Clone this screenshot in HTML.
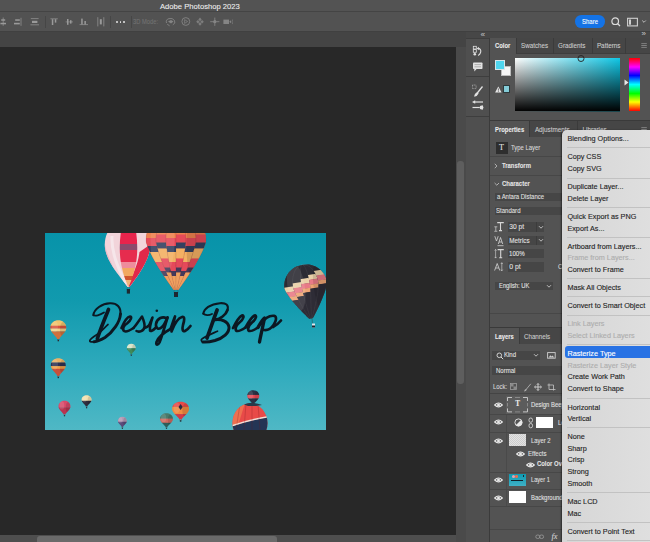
<!DOCTYPE html>
<html><head><meta charset="utf-8"><style>
html,body{margin:0;padding:0;width:650px;height:542px;overflow:hidden;background:#282828;}
body{position:relative;font-family:"Liberation Sans",sans-serif;}
.a{position:absolute;}
.t{position:absolute;white-space:nowrap;-webkit-text-stroke:0.08px currentColor;}
.m{font-size:7.25px;line-height:10px;-webkit-text-stroke:0.12px currentColor;}
svg{position:absolute;overflow:visible;}
</style></head><body>
<div class='a' style='left:0px;top:0px;width:650px;height:11px;background:#535353;'></div>
<div class='a' style='left:0px;top:11px;width:650px;height:1px;background:#444444;'></div>
<div class='a' style='left:0px;top:12px;width:650px;height:19px;background:#525252;'></div>
<div class='a' style='left:0px;top:31px;width:650px;height:1px;background:#404040;'></div>
<div class='a' style='left:0px;top:32px;width:466px;height:15.5px;background:#444444;'></div>
<div class='a' style='left:0px;top:47px;width:456px;height:488px;background:#282828;'></div>
<div class='a' style='left:456px;top:47px;width:10px;height:495px;background:#4a4a4a;'></div>
<div class='a' style='left:457.3px;top:161px;width:6.6px;height:222.5px;background:#5e5e5e;border-radius:3.3px;'></div>
<div class='a' style='left:0px;top:535px;width:456px;height:7px;background:#4e4e4e;'></div>
<div class='a' style='left:37px;top:536px;width:240px;height:6px;background:#6a6a6a;border-radius:3px 3px 0 0;'></div>
<div class='a' style='left:466px;top:32px;width:184px;height:510px;background:#474747;'></div>
<div class='a' style='left:489px;top:38px;width:1px;height:504px;background:#3b3b3b;'></div>
<div class='a' style='left:490px;top:38px;width:160px;height:504px;background:#535353;'></div>
<div class='t' style='left:160.00px;top:2.00px;font-size:7.65px;line-height:10px;color:#eeeeee;font-weight:400;'>Adobe Photoshop 2023</div>
<svg style='left:0px;top:0px;' width='140' height='32' viewBox='0 0 140 32'>
<path d='M3.2 17.5 V25.8' stroke='#9a9a9a' stroke-width='0.7'/>
<rect x='1.2' y='19.3' width='4' height='1.4' fill='#9a9a9a'/><rect x='0.4' y='22.8' width='5.6' height='1.5' fill='#9a9a9a'/>
<path d='M21 17.8 V25.8' stroke='#9a9a9a' stroke-width='0.7'/>
<rect x='15.2' y='19.3' width='4.6' height='1.5' fill='#9a9a9a'/><rect x='14' y='22.8' width='5.8' height='1.6' fill='#9a9a9a'/>
<path d='M30.8 18.6 H38.6 M30.4 24.8 H39' stroke='#9a9a9a' stroke-width='0.7'/>
<rect x='32' y='20.8' width='5.4' height='2.2' fill='#9a9a9a'/>
<path d='M50.4 18.8 H57.8' stroke='#9a9a9a' stroke-width='0.7'/>
<rect x='51.8' y='19.2' width='1.5' height='5.8' fill='#9a9a9a'/><rect x='54.8' y='19.2' width='1.5' height='3.4' fill='#9a9a9a'/>
<path d='M65.6 21.9 H73' stroke='#9a9a9a' stroke-width='0.6'/>
<rect x='67' y='19' width='1.5' height='5.8' fill='#9a9a9a'/><rect x='70' y='20.2' width='1.5' height='3.4' fill='#9a9a9a'/>
<path d='M79.6 24.6 H88' stroke='#9a9a9a' stroke-width='0.7'/>
<rect x='81.2' y='18.6' width='1.5' height='5.8' fill='#9a9a9a'/><rect x='84.4' y='21' width='1.5' height='3.4' fill='#9a9a9a'/>
<path d='M97.8 17.2 V26.4 M103.8 17.2 V26.4' stroke='#9a9a9a' stroke-width='0.7'/>
<rect x='99.8' y='19.2' width='2' height='5.2' fill='#9a9a9a'/>
</svg>
<div class='a' style='left:44.8px;top:15.5px;width:0.8px;height:12.5px;background:#464646;'></div>
<div class='a' style='left:110.3px;top:15.5px;width:0.8px;height:12.5px;background:#464646;'></div>
<div class='a' style='left:131.3px;top:15.5px;width:0.8px;height:12.5px;background:#464646;'></div>
<div class='a' style='left:116.25px;top:20.9px;width:1.9px;height:1.9px;background:#e4e4e4;border-radius:1px;'></div>
<div class='a' style='left:119.55px;top:20.9px;width:1.9px;height:1.9px;background:#e4e4e4;border-radius:1px;'></div>
<div class='a' style='left:122.85px;top:20.9px;width:1.9px;height:1.9px;background:#e4e4e4;border-radius:1px;'></div>
<div class='t' style='left:133.00px;top:16.80px;font-size:6.30px;line-height:10px;color:#727272;font-weight:400;transform:scaleX(0.915);transform-origin:0 50%;'>3D Mode:</div>
<svg style='left:0px;top:0px;' width='240' height='32' viewBox='0 0 240 32'>
<path d='M166.5 23 Q165.5 19.5 169 18.6 Q172.5 17.6 174.5 20.5 Q176 23.5 172.8 24.8' fill='none' stroke='#858585' stroke-width='0.9'/>
<path d='M168 21.5 L171 20 L173.5 21.6 L171 23.4 Z' fill='#858585'/>
<path d='M167.2 24.2 L169.6 25.8' stroke='#858585' stroke-width='0.9'/>
<circle cx='185.8' cy='21.5' r='3.9' fill='none' stroke='#858585' stroke-width='0.9'/>
<path d='M184.6 19.6 L187.6 21.5 L184.6 23.4 Z' fill='none' stroke='#858585' stroke-width='0.7'/>
<path d='M200 17.6 L201.7 19.5 L200 21.3 L198.3 19.5 Z M200 22 L201.7 23.9 L200 25.7 L198.3 23.9 Z M196.2 21.7 L197.9 20 L199.6 21.7 L197.9 23.4 Z M203.8 21.7 L202.1 20 L200.4 21.7 L202.1 23.4 Z' fill='#858585' opacity='0.85'/>
<path d='M214.8 17.6 V25.9 M210.2 21.7 H219.4' stroke='#858585' stroke-width='0.9'/>
<circle cx='214.8' cy='21.7' r='1.6' fill='#858585'/>
<rect x='223.4' y='19.6' width='5.6' height='4.4' fill='#858585'/>
<path d='M229.2 21.8 L231 20.3 V23.3 Z' fill='#858585'/>
<path d='M232.6 19.5 Q231.6 21.8 232.6 24.1' fill='none' stroke='#858585' stroke-width='0.6'/>
</svg>
<div class='a' style='left:575.2px;top:15.2px;width:30px;height:12.6px;background:#1473e6;border-radius:6.3px;'></div>
<div class='t' style='left:581.50px;top:16.50px;font-size:6.30px;line-height:10px;color:#ffffff;font-weight:400;transform:scaleX(0.952);transform-origin:0 50%;'>Share</div>
<svg style='left:609px;top:16px;' width='14' height='12' viewBox='0 0 14 12'><circle cx='6.2' cy='5.2' r='3.3' fill='none' stroke='#dcdcdc' stroke-width='1.2'/><path d='M8.6 7.6 L11 10' stroke='#dcdcdc' stroke-width='1.3'/></svg>
<svg style='left:626px;top:17px;' width='13' height='10' viewBox='0 0 13 10'><rect x='1.6' y='1.3' width='9.8' height='7.6' fill='none' stroke='#d0d0d0' stroke-width='1.1'/><rect x='3' y='2.5' width='2' height='5.2' fill='#d0d0d0'/></svg>
<svg style='left:641px;top:19px;' width='6' height='5' viewBox='0 0 6 5'><path d='M1.2 1.5 L3 3.3 L4.8 1.5' fill='none' stroke='#c8c8c8' stroke-width='0.9'/></svg>
<div class='t' style='left:480.50px;top:29.60px;font-size:8.09px;line-height:10px;color:#bbbbbb;font-weight:400;'>&#171;</div>
<div class='t' style='left:641.50px;top:29.40px;font-size:8.09px;line-height:10px;color:#bbbbbb;font-weight:400;'>&#187;</div>
<div class='a' style='left:466px;top:38px;width:23px;height:504px;background:#4f4f4f;'></div>
<div class='a' style='left:466px;top:75.5px;width:23px;height:1px;background:#3e3e3e;'></div>
<div class='a' style='left:466px;top:115.5px;width:23px;height:1px;background:#3e3e3e;'></div>
<div class='a' style='left:466px;top:37.5px;width:23px;height:0.8px;background:#3e3e3e;'></div>
<svg style='left:466px;top:40px;' width='24' height='75' viewBox='0 0 24 75'>
<rect x='7.3' y='6.3' width='3' height='2.7' fill='none' stroke='#e2e2e2' stroke-width='0.8'/>
<rect x='7.3' y='9.6' width='3' height='2.7' fill='none' stroke='#e2e2e2' stroke-width='0.8'/>
<circle cx='8.8' cy='14.3' r='1.3' fill='#e2e2e2'/>
<path d='M12.2 8.4 Q15.6 9 14.6 12.4 Q14.1 14.4 12.2 15.4' fill='none' stroke='#e2e2e2' stroke-width='1.1'/>
<path d='M10.8 8.5 L12.8 6.8 L12.8 10.2 Z' fill='#e2e2e2'/>
<rect x='7' y='22.5' width='9.5' height='6.5' rx='0.8' fill='#e2e2e2'/>
<path d='M8.3 28.8 L10.8 28.8 L8.3 31.5 Z' fill='#e2e2e2'/>
<path d='M8.5 24.6 H15 M8.5 26.8 H15' stroke='#8a8a8a' stroke-width='0.6'/>
<rect x='6.5' y='45' width='3.6' height='3.6' fill='none' stroke='#c8c8c8' stroke-width='0.6' stroke-dasharray='0.9 0.6'/>
<path d='M16.5 46.5 L11.3 53' stroke='#e2e2e2' stroke-width='1.3'/>
<path d='M11.5 52 Q8.5 53 8.2 56.8 Q11.5 56.3 12.6 53.6 Z' fill='#e2e2e2'/>
<path d='M8 62 H17' stroke='#e2e2e2' stroke-width='1.2'/>
<path d='M6 62 L9.2 60.2 V63.8 Z' fill='#e2e2e2'/>
<path d='M6.5 67.5 H13' stroke='#e2e2e2' stroke-width='1.2'/>
<path d='M12.8 67.5 L17 65.2 V69.8 Z' fill='#e2e2e2'/><circle cx='15.5' cy='67.5' r='1.9' fill='#e2e2e2'/>
</svg>
<div class='a' style='left:490px;top:38px;width:160px;height:15.5px;background:#464646;'></div>
<div class='a' style='left:490px;top:53px;width:160px;height:1px;background:#3e3e3e;'></div>
<div class='a' style='left:490px;top:38px;width:26px;height:16px;background:#535353;'></div>
<div class='a' style='left:516px;top:38px;width:1px;height:15.5px;background:#3b3b3b;'></div>
<div class='a' style='left:553px;top:38px;width:1px;height:15.5px;background:#3b3b3b;'></div>
<div class='a' style='left:591.5px;top:38px;width:1px;height:15.5px;background:#3b3b3b;'></div>
<div class='a' style='left:625.4px;top:38px;width:1px;height:15.5px;background:#3b3b3b;'></div>
<div class='t' style='left:494.60px;top:40.80px;font-size:6.30px;line-height:10px;color:#ececec;font-weight:700;transform:scaleX(0.936);transform-origin:0 50%;'>Color</div>
<div class='t' style='left:520.50px;top:40.60px;font-size:6.30px;line-height:10px;color:#cdcdcd;font-weight:400;transform:scaleX(0.992);transform-origin:0 50%;'>Swatches</div>
<div class='t' style='left:558.00px;top:40.60px;font-size:6.30px;line-height:10px;color:#cdcdcd;font-weight:400;'>Gradients</div>
<div class='t' style='left:596.90px;top:40.60px;font-size:6.35px;line-height:10px;color:#cdcdcd;font-weight:400;'>Patterns</div>
<svg style='left:640.5px;top:43px;' width='7' height='6' viewBox='0 0 7 6'><path d='M0.3 0.6 H5.8 M0.3 2.5 H5.8 M0.3 4.4 H5.8' stroke='#a8a8a8' stroke-width='0.6'/></svg>
<div class='a' style='left:500.7px;top:65.9px;width:10.7px;height:10.2px;background:#f6f6f6;border:0.6px solid #bdbdbd;box-sizing:border-box;'></div>
<div class='a' style='left:494.8px;top:59.5px;width:10.6px;height:10.6px;background:#4fd6ef;border:0.8px solid #d6e6ea;box-sizing:border-box;'></div>
<svg style='left:494.5px;top:85.5px;' width='7' height='7' viewBox='0 0 7 7'><path d='M3.3 0.4 L6.6 6.6 H0.1 Z' fill='#e8e8e8'/><rect x='2.9' y='2.4' width='0.8' height='2.3' fill='#555'/><rect x='2.9' y='5.2' width='0.8' height='0.8' fill='#555'/></svg>
<div class='a' style='left:502.9px;top:85.4px;width:7.6px;height:7.3px;background:#84ccd8;border:0.8px solid #2e3a3c;box-sizing:border-box;'></div>
<svg style='left:515px;top:57.5px;' width='105' height='53.5' viewBox='0 0 105 53.5'><defs><linearGradient id='cf1' x1='0' y1='0' x2='1' y2='0'><stop offset='0' stop-color='#ffffff'/><stop offset='1' stop-color='#0fc7e6'/></linearGradient>
<linearGradient id='cf2' x1='0' y1='0' x2='0' y2='1'><stop offset='0' stop-color='#000' stop-opacity='0'/><stop offset='1' stop-color='#000' stop-opacity='1'/></linearGradient></defs>
<rect width='105' height='53.5' fill='url(#cf1)'/><rect width='105' height='53.5' fill='url(#cf2)'/>
<circle cx='66' cy='0.5' r='3' fill='none' stroke='#222' stroke-width='0.9'/></svg>
<svg style='left:629px;top:57.8px;' width='11' height='53' viewBox='0 0 11 53'><defs><linearGradient id='hue' x1='0' y1='0' x2='0' y2='1'>
<stop offset='0' stop-color='#ff0000'/><stop offset='0.17' stop-color='#ff00ff'/><stop offset='0.33' stop-color='#0000ff'/><stop offset='0.5' stop-color='#00ffff'/><stop offset='0.67' stop-color='#00ff00'/><stop offset='0.83' stop-color='#ffff00'/><stop offset='1' stop-color='#ff0000'/></linearGradient></defs>
<rect width='11' height='53' fill='url(#hue)'/></svg>
<svg style='left:624px;top:79px;' width='5' height='7' viewBox='0 0 5 7'><path d='M0.5 0.5 L4.5 3.5 L0.5 6.5 Z' fill='#e8e8e8'/></svg>
<div class='a' style='left:490px;top:120px;width:160px;height:1px;background:#3a3a3a;'></div>
<div class='a' style='left:490px;top:121px;width:160px;height:16px;background:#464646;'></div>
<div class='a' style='left:490px;top:121px;width:39px;height:16px;background:#535353;'></div>
<div class='a' style='left:529px;top:121px;width:1px;height:16px;background:#3b3b3b;'></div>
<div class='t' style='left:494.70px;top:125.20px;font-size:6.30px;line-height:10px;color:#ececec;font-weight:700;transform:scaleX(0.937);transform-origin:0 50%;'>Properties</div>
<div class='t' style='left:534.90px;top:125.00px;font-size:6.30px;line-height:10px;color:#cdcdcd;font-weight:400;'>Adjustments</div>
<div class='a' style='left:576.5px;top:121px;width:1px;height:16px;background:#3b3b3b;'></div>
<div class='t' style='left:582.50px;top:125.00px;font-size:6.30px;line-height:10px;color:#cdcdcd;font-weight:400;'>Libraries</div>
<svg style='left:640.5px;top:126.5px;' width='7' height='6' viewBox='0 0 7 6'><path d='M0.3 0.6 H5.8 M0.3 2.5 H5.8 M0.3 4.4 H5.8' stroke='#a8a8a8' stroke-width='0.6'/></svg>
<div class='a' style='left:496px;top:142px;width:12px;height:11.5px;background:#2e2e2e;'></div>
<div class='t' style='left:499.00px;top:143.00px;font-size:8.00px;line-height:10px;color:#e6e6e6;font-weight:400;font-family:"Liberation Serif",serif;'>T</div>
<div class='t' style='left:510.90px;top:143.00px;font-size:6.30px;line-height:10px;color:#dadada;font-weight:400;transform:scaleX(0.940);transform-origin:0 50%;'>Type Layer</div>
<div class='a' style='left:490px;top:156px;width:160px;height:1px;background:#474747;'></div>
<svg style='left:493px;top:162px;' width='6' height='8' viewBox='0 0 6 8'><path d='M1.8 1.8 L3.9 4 L1.8 6.2' fill='none' stroke='#c8c8c8' stroke-width='0.8'/></svg>
<div class='t' style='left:501.90px;top:161.00px;font-size:6.30px;line-height:10px;color:#e4e4e4;font-weight:700;transform:scaleX(0.938);transform-origin:0 50%;'>Transform</div>
<div class='a' style='left:490px;top:174.5px;width:160px;height:1px;background:#474747;'></div>
<svg style='left:492.5px;top:180.5px;' width='8' height='6' viewBox='0 0 8 6'><path d='M1.6 2 L3.8 4.2 L6 2' fill='none' stroke='#c8c8c8' stroke-width='0.8'/></svg>
<div class='t' style='left:501.90px;top:178.60px;font-size:6.30px;line-height:10px;color:#e4e4e4;font-weight:700;transform:scaleX(0.945);transform-origin:0 50%;'>Character</div>
<div class='a' style='left:495px;top:192.8px;width:70px;height:8px;background:#464646;'></div>
<div class='t' style='left:496.80px;top:191.80px;font-size:6.30px;line-height:10px;color:#e0e0e0;font-weight:400;transform:scaleX(0.945);transform-origin:0 50%;'>a Antara Distance</div>
<div class='a' style='left:495px;top:207px;width:70px;height:8px;background:#464646;'></div>
<div class='t' style='left:496.30px;top:205.70px;font-size:6.30px;line-height:10px;color:#e0e0e0;font-weight:400;transform:scaleX(0.958);transform-origin:0 50%;'>Standard</div>
<div class='a' style='left:508px;top:222.2px;width:36px;height:9.6px;background:#464646;'></div>
<div class='a' style='left:536px;top:222.2px;width:0.8px;height:9.6px;background:#3c3c3c;'></div>
<svg style='left:537.5px;top:224.5px;' width='6' height='5' viewBox='0 0 6 5'><path d='M1 1.2 L3 3.2 L5 1.2' fill='none' stroke='#dadada' stroke-width='0.8'/></svg>
<div class='t' style='left:509.30px;top:222.00px;font-size:6.70px;line-height:10px;color:#e4e4e4;font-weight:400;'>30 pt</div>
<div class='a' style='left:508px;top:235.89999999999998px;width:36px;height:9.6px;background:#464646;'></div>
<div class='a' style='left:536px;top:235.89999999999998px;width:0.8px;height:9.6px;background:#3c3c3c;'></div>
<svg style='left:537.5px;top:238.2px;' width='6' height='5' viewBox='0 0 6 5'><path d='M1 1.2 L3 3.2 L5 1.2' fill='none' stroke='#dadada' stroke-width='0.8'/></svg>
<div class='t' style='left:509.30px;top:235.70px;font-size:6.33px;line-height:10px;color:#e4e4e4;font-weight:400;'>Metrics</div>
<div class='a' style='left:508px;top:248.7px;width:36px;height:9.6px;background:#464646;'></div>
<div class='t' style='left:509.30px;top:248.50px;font-size:6.30px;line-height:10px;color:#e4e4e4;font-weight:400;transform:scaleX(0.974);transform-origin:0 50%;'>100%</div>
<div class='a' style='left:508px;top:262.0px;width:36px;height:9.6px;background:#464646;'></div>
<div class='t' style='left:509.30px;top:261.80px;font-size:6.89px;line-height:10px;color:#e4e4e4;font-weight:400;'>0 pt</div>
<svg style='left:490px;top:218px;' width='22' height='56' viewBox='0 0 22 56'>
<path d='M497.2 222.6 H503.8 M500.5 222.6 V230.6 M499 230.6 H502' transform='translate(-490 -218)' stroke='#d6d6d6' stroke-width='1.1' fill='none'/>
<path d='M494.3 226.8 H497.3 M495.8 226.8 V231 M494.3 231.3 H497.3' transform='translate(-490 -218)' stroke='#d6d6d6' stroke-width='0.7' fill='none'/>
<path d='M494.8 236.2 L496.5 241 L498.2 236.2' transform='translate(-490 -218)' stroke='#d6d6d6' stroke-width='0.8' fill='none'/>
<path d='M498.3 244 L500.5 237.5 L502.7 244 M499 242 H502' transform='translate(-490 -218)' stroke='#d6d6d6' stroke-width='0.8' fill='none'/>
<path d='M497.5 245.7 H503.5' transform='translate(-490 -218)' stroke='#d6d6d6' stroke-width='0.8'/>
<path d='M497.6 249.6 H503.8 M500.7 249.6 V257.8 M499.2 257.8 H502.2' transform='translate(-490 -218)' stroke='#d6d6d6' stroke-width='1.1' fill='none'/>
<path d='M495.6 249.5 V258 M494.7 250.6 L495.6 249.4 L496.5 250.6 M494.7 256.9 L495.6 258.1 L496.5 256.9' transform='translate(-490 -218)' stroke='#d6d6d6' stroke-width='0.6' fill='none'/>
<path d='M494.6 270.5 L497.2 263.5 L499.8 270.5 M495.6 268 H498.8' transform='translate(-490 -218)' stroke='#d6d6d6' stroke-width='0.8' fill='none'/>
<path d='M501.8 262.8 V270.8 M500.9 264 L501.8 262.7 L502.7 264 M500.9 269.6 L501.8 270.9 L502.7 269.6' transform='translate(-490 -218)' stroke='#d6d6d6' stroke-width='0.6' fill='none'/>
</svg>
<div class='t' style='left:557.50px;top:261.60px;font-size:6.30px;line-height:10px;color:#dadada;font-weight:400;transform:scaleX(0.989);transform-origin:0 50%;'>C</div>
<div class='a' style='left:495px;top:281.7px;width:58px;height:8.6px;background:#464646;'></div>
<div class='t' style='left:498.80px;top:281.20px;font-size:6.30px;line-height:10px;color:#e4e4e4;font-weight:400;transform:scaleX(0.924);transform-origin:0 50%;'>English: UK</div>
<svg style='left:546px;top:284px;' width='6' height='5' viewBox='0 0 6 5'><path d='M1 1.2 L3 3.2 L5 1.2' fill='none' stroke='#dadada' stroke-width='0.8'/></svg>
<div class='a' style='left:490px;top:313px;width:160px;height:1px;background:#474747;'></div>
<div class='a' style='left:490px;top:314px;width:160px;height:14px;background:#535353;'></div>
<div class='a' style='left:490px;top:327px;width:160px;height:1px;background:#3a3a3a;'></div>
<div class='a' style='left:490px;top:328px;width:160px;height:16.3px;background:#464646;'></div>
<div class='a' style='left:490px;top:328px;width:28.7px;height:16.3px;background:#535353;'></div>
<div class='a' style='left:518.7px;top:328px;width:1px;height:16.3px;background:#3b3b3b;'></div>
<div class='t' style='left:494.70px;top:331.60px;font-size:6.30px;line-height:10px;color:#ececec;font-weight:700;transform:scaleX(0.925);transform-origin:0 50%;'>Layers</div>
<div class='t' style='left:523.90px;top:331.60px;font-size:6.30px;line-height:10px;color:#cdcdcd;font-weight:400;transform:scaleX(0.984);transform-origin:0 50%;'>Channels</div>
<div class='a' style='left:492px;top:350.6px;width:48px;height:9.4px;background:#464646;'></div>
<svg style='left:495.5px;top:351.5px;' width='8' height='8' viewBox='0 0 8 8'><circle cx='3.3' cy='3.3' r='2.3' fill='none' stroke='#dedede' stroke-width='0.9'/><path d='M5 5 L7.2 7.2' stroke='#dedede' stroke-width='1'/></svg>
<div class='t' style='left:503.50px;top:350.00px;font-size:6.30px;line-height:10px;color:#e4e4e4;font-weight:400;transform:scaleX(0.960);transform-origin:0 50%;'>Kind</div>
<svg style='left:533px;top:353px;' width='6' height='5' viewBox='0 0 6 5'><path d='M1 1.2 L3 3.2 L5 1.2' fill='none' stroke='#dadada' stroke-width='0.8'/></svg>
<svg style='left:547px;top:352.3px;' width='9' height='7' viewBox='0 0 9 7'><rect x='0.6' y='0.6' width='7.6' height='5.6' fill='none' stroke='#d0d0d0' stroke-width='0.9'/><path d='M1.6 5.4 L3.4 3.2 L4.6 4.4 L5.6 3.6 L7.2 5.4 Z' fill='#d0d0d0'/></svg>
<div class='a' style='left:492px;top:366px;width:75px;height:9px;background:#464646;'></div>
<div class='t' style='left:495.70px;top:365.60px;font-size:6.30px;line-height:10px;color:#e4e4e4;font-weight:400;transform:scaleX(0.956);transform-origin:0 50%;'>Normal</div>
<div class='t' style='left:492.80px;top:381.80px;font-size:6.30px;line-height:10px;color:#dadada;font-weight:400;transform:scaleX(0.943);transform-origin:0 50%;'>Lock:</div>
<svg style='left:510.3px;top:383.4px;' width='7' height='7' viewBox='0 0 7 7'><rect x='0.5' y='0.5' width='6' height='6' fill='none' stroke='#a8a8a8' stroke-width='0.7'/><rect x='0.5' y='0.5' width='3' height='3' fill='#8a8a8a'/><rect x='3.5' y='3.5' width='3' height='3' fill='#8a8a8a'/></svg>
<svg style='left:522.5px;top:382.5px;' width='9' height='9' viewBox='0 0 9 9'><path d='M7.8 0.8 L3.2 6.4' stroke='#b0b0b0' stroke-width='0.9'/><path d='M3.3 5.8 Q1.5 6.6 1 8.5 Q2.9 8.2 3.9 6.8 Z' fill='#b0b0b0'/></svg>
<svg style='left:534.3px;top:383px;' width='8' height='8' viewBox='0 0 8 8'><path d='M4 0.6 V7.4 M0.6 4 H7.4' stroke='#d6d6d6' stroke-width='0.9'/><path d='M2.8 1.8 L4 0.5 L5.2 1.8 M2.8 6.2 L4 7.5 L5.2 6.2 M1.8 2.8 L0.5 4 L1.8 5.2 M6.2 2.8 L7.5 4 L6.2 5.2' fill='none' stroke='#d6d6d6' stroke-width='0.8'/></svg>
<svg style='left:547.2px;top:383px;' width='9' height='8' viewBox='0 0 9 8'><path d='M2 0.5 V6.5 H8.5 M0.5 2 H6.5 V7.5' fill='none' stroke='#c4c4c4' stroke-width='0.8'/></svg>
<div class='a' style='left:490px;top:393px;width:160px;height:1px;background:#444;'></div>
<div class='a' style='left:506px;top:396px;width:60px;height:17.5px;background:#5c5c5c;'></div>
<div class='a' style='left:506px;top:413.5px;width:1px;height:93px;background:#4a4a4a;'></div>
<svg style='left:493.8px;top:401.5px;' width='9' height='6' viewBox='0 0 9 6'><path d='M0.7 3 Q4.5 -0.9 8.3 3 Q4.5 6.9 0.7 3 Z' fill='none' stroke='#e8e8e8' stroke-width='1.1'/><circle cx='4.5' cy='3' r='1.5' fill='#e8e8e8'/></svg>
<svg style='left:507px;top:396.6px;' width='21' height='15.4' viewBox='0 0 21 15.4'><path d='M0.5 4 V0.5 H5 M16 0.5 H20.5 V4 M20.5 11.4 V14.9 H16 M5 14.9 H0.5 V11.4' fill='none' stroke='#d0d0d0' stroke-width='0.9'/><path d='M0.5 6 V9.4 M20.5 6 V9.4 M8 0.5 H13 M8 14.9 H13' fill='none' stroke='#a8a8a8' stroke-width='0.6'/></svg>
<div class='t' style='left:515.30px;top:399.30px;font-size:7.20px;line-height:10px;color:#ececec;font-weight:700;font-family:"Liberation Serif",serif;'>T</div>
<div class='t' style='left:531.30px;top:399.60px;font-size:6.30px;line-height:10px;color:#e4e4e4;font-weight:400;transform:scaleX(0.937);transform-origin:0 50%;'>Design Beep</div>
<div class='a' style='left:490px;top:413.5px;width:160px;height:1px;background:#474747;'></div>
<svg style='left:493.8px;top:419.4px;' width='9' height='6' viewBox='0 0 9 6'><path d='M0.7 3 Q4.5 -0.9 8.3 3 Q4.5 6.9 0.7 3 Z' fill='none' stroke='#e8e8e8' stroke-width='1.1'/><circle cx='4.5' cy='3' r='1.5' fill='#e8e8e8'/></svg>
<svg style='left:513.5px;top:418px;' width='9' height='9' viewBox='0 0 9 9'><circle cx='4.5' cy='4.5' r='3.6' fill='none' stroke='#e8e8e8' stroke-width='0.9'/><path d='M4.5 0.9 A3.6 3.6 0 0 1 4.5 8.1 Z' fill='#e8e8e8' transform='rotate(45 4.5 4.5)'/></svg>
<svg style='left:527.5px;top:416.5px;' width='6' height='12' viewBox='0 0 6 12'><rect x='1' y='1' width='3.5' height='4.3' rx='1.7' fill='none' stroke='#e0e0e0' stroke-width='0.8'/><rect x='1' y='6.5' width='3.5' height='4.3' rx='1.7' fill='none' stroke='#e0e0e0' stroke-width='0.8'/></svg>
<div class='a' style='left:535.5px;top:416.5px;width:17.5px;height:11.8px;background:#ffffff;'></div>
<div class='t' style='left:557.80px;top:417.50px;font-size:6.30px;line-height:10px;color:#e4e4e4;font-weight:400;transform:scaleX(0.937);transform-origin:0 50%;'>Levels 1</div>
<div class='a' style='left:490px;top:431.5px;width:160px;height:1px;background:#474747;'></div>
<svg style='left:493.8px;top:437.5px;' width='9' height='6' viewBox='0 0 9 6'><path d='M0.7 3 Q4.5 -0.9 8.3 3 Q4.5 6.9 0.7 3 Z' fill='none' stroke='#e8e8e8' stroke-width='1.1'/><circle cx='4.5' cy='3' r='1.5' fill='#e8e8e8'/></svg>
<div class='a' style='left:509.2px;top:434px;width:16.6px;height:12px;background:#e2e2e2;background-image:linear-gradient(45deg,#cdcdcd 25%,transparent 25%,transparent 75%,#cdcdcd 75%),linear-gradient(45deg,#cdcdcd 25%,transparent 25%,transparent 75%,#cdcdcd 75%);background-size:2px 2px;background-position:0 0,1px 1px;'></div>
<div class='t' style='left:531.30px;top:435.50px;font-size:6.30px;line-height:10px;color:#e0e0e0;font-weight:400;transform:scaleX(0.933);transform-origin:0 50%;'>Layer 2</div>
<svg style='left:516.3px;top:450.7px;' width='9' height='6' viewBox='0 0 9 6'><path d='M0.7 3 Q4.5 -0.9 8.3 3 Q4.5 6.9 0.7 3 Z' fill='none' stroke='#e8e8e8' stroke-width='1.1'/><circle cx='4.5' cy='3' r='1.5' fill='#e8e8e8'/></svg>
<div class='t' style='left:527.70px;top:448.50px;font-size:6.30px;line-height:10px;color:#e0e0e0;font-weight:400;transform:scaleX(0.966);transform-origin:0 50%;'>Effects</div>
<svg style='left:525.5px;top:461.5px;' width='9' height='6' viewBox='0 0 9 6'><path d='M0.7 3 Q4.5 -0.9 8.3 3 Q4.5 6.9 0.7 3 Z' fill='none' stroke='#e8e8e8' stroke-width='1.1'/><circle cx='4.5' cy='3' r='1.5' fill='#e8e8e8'/></svg>
<div class='t' style='left:536.80px;top:459.30px;font-size:6.30px;line-height:10px;color:#e4e4e4;font-weight:700;transform:scaleX(0.937);transform-origin:0 50%;'>Color Overlay</div>
<div class='a' style='left:490px;top:472px;width:160px;height:1px;background:#474747;'></div>
<svg style='left:493.8px;top:476.8px;' width='9' height='6' viewBox='0 0 9 6'><path d='M0.7 3 Q4.5 -0.9 8.3 3 Q4.5 6.9 0.7 3 Z' fill='none' stroke='#e8e8e8' stroke-width='1.1'/><circle cx='4.5' cy='3' r='1.5' fill='#e8e8e8'/></svg>
<div class='a' style='left:509.2px;top:473.7px;width:16.6px;height:11.9px;background:#1fa3bf;background:linear-gradient(180deg,#0f9bb2,#3fb0c6);'></div>
<div class='a' style='left:512px;top:474.5px;width:3px;height:3px;background:#e8a0b0;border-radius:1.5px;'></div>
<div class='a' style='left:515px;top:475px;width:2.5px;height:2.5px;background:#e87050;border-radius:1.2px;'></div>
<div class='a' style='left:511px;top:480.3px;width:12px;height:1.2px;background:#10202a;'></div>
<div class='a' style='left:523px;top:475px;width:1px;height:1.5px;background:#202830;'></div>
<div class='t' style='left:531.30px;top:474.80px;font-size:6.30px;line-height:10px;color:#e0e0e0;font-weight:400;transform:scaleX(0.895);transform-origin:0 50%;'>Layer 1</div>
<div class='a' style='left:490px;top:488.7px;width:160px;height:1px;background:#474747;'></div>
<svg style='left:493.8px;top:494.5px;' width='9' height='6' viewBox='0 0 9 6'><path d='M0.7 3 Q4.5 -0.9 8.3 3 Q4.5 6.9 0.7 3 Z' fill='none' stroke='#e8e8e8' stroke-width='1.1'/><circle cx='4.5' cy='3' r='1.5' fill='#e8e8e8'/></svg>
<div class='a' style='left:509.2px;top:491.2px;width:16.6px;height:11.8px;background:#ffffff;'></div>
<div class='t' style='left:531.30px;top:492.50px;font-size:6.30px;line-height:10px;color:#e4e4e4;font-weight:400;transform:scaleX(0.937);transform-origin:0 50%;'>Background</div>
<div class='a' style='left:490px;top:505.7px;width:160px;height:1px;background:#474747;'></div>
<div class='a' style='left:490px;top:529px;width:160px;height:1px;background:#474747;'></div>
<svg style='left:535px;top:533.5px;' width='10' height='6' viewBox='0 0 10 6'><rect x='0.8' y='1' width='4' height='3.5' rx='1.7' fill='none' stroke='#9a9a9a' stroke-width='0.8'/><rect x='4.6' y='1' width='4' height='3.5' rx='1.7' fill='none' stroke='#9a9a9a' stroke-width='0.8'/></svg>
<div class='t' style='left:551.50px;top:532.00px;font-size:8.36px;line-height:10px;color:#d8d8d8;font-weight:400;font-family:"Liberation Serif",serif;'><i>fx</i></div>
<div class='a' style='left:45px;top:233px;width:281px;height:197px;overflow:hidden;'><svg width='281' height='197' viewBox='45 233 281 197' style='position:absolute;left:0;top:0;'><defs><linearGradient id='sky' x1='0' y1='0' x2='0' y2='1'>
<stop offset='0' stop-color='#0793a9'/><stop offset='0.35' stop-color='#119aae'/><stop offset='0.7' stop-color='#30abbd'/><stop offset='1' stop-color='#4fb8c5'/></linearGradient></defs><rect x='45' y='233' width='281' height='197' fill='url(#sky)'/><clipPath id='b1c'><path d='M105,248 C103,228 118,220 129,220 C142,220 153,230 150.5,247 C148.5,262 137,277 129.5,287 L127.5,287 C121,277 107,263 105,248 Z'/></clipPath>
<g clip-path='url(#b1c)'>
<rect x='100' y='220' width='55' height='70' fill='#f2d4da'/>
<path d='M104,240 C108,262 118,276 128,287 L120,287 C110,272 103,258 104,240 Z' fill='#eab8c4'/>
<rect x='100' y='265' width='55' height='25' fill='#f2d2d8' opacity='0.6'/>
<path d='M151,244 C149,262 140,277 129.5,288 L128.5,283 C133,275 138,264 139.5,252 Z' fill='#e0284a'/>

<path d='M112,236 C111,252 118,268 126,284' fill='none' stroke='#f6e6ea' stroke-width='3'/>
</g>
<clipPath id='b1g'><path d='M122,226 C119,240 119,256 122,268 C124,277 127,284 128.5,287 C130,284 133,277 135,268 C138,256 138,240 135,226 Z'/></clipPath>
<g clip-path='url(#b1g)'>
<rect x='118' y='222' width='22' height='22' fill='#e8244c'/>
<rect x='118' y='244' width='22' height='6' fill='#8c4a6c'/>
<rect x='118' y='250' width='22' height='12' fill='#e62c4e'/>
<rect x='118' y='262' width='22' height='6' fill='#ee8c9c'/>
<rect x='118' y='268' width='22' height='8' fill='#f2a860'/>
<rect x='118' y='276' width='22' height='4' fill='#d0542e'/>
<rect x='118' y='280' width='22' height='8' fill='#f0b478'/>
</g>
<path d='M127.5,287 L127,289.5 M129.5,287 L130,289.5' stroke='#444' stroke-width='0.3'/>
<rect x='126.8' y='289' width='3.2' height='4.6' fill='#1e2a30'/>
<g transform='rotate(0 176 290)'><polygon points='176.00,208.00 184.54,209.37 187.95,210.73 190.48,212.10 192.54,213.47 194.28,214.83 195.79,216.20 197.12,217.57 198.31,218.93 199.36,220.30 200.31,221.67 201.16,223.03 201.93,224.40 202.61,225.77 203.22,227.13 203.76,228.50 204.24,229.87 204.66,231.23 205.01,232.60 205.31,233.97 205.55,235.33 205.74,236.70 205.88,238.07 205.97,239.43 206.00,240.80 205.78,242.17 205.41,243.53 204.96,244.90 204.47,246.27 203.93,247.63 203.36,249.00 202.77,250.37 202.14,251.73 201.49,253.10 200.81,254.47 200.12,255.83 199.41,257.20 198.67,258.57 197.92,259.93 197.16,261.30 196.38,262.67 195.58,264.03 194.77,265.40 193.95,266.77 193.11,268.13 192.26,269.50 191.39,270.87 190.52,272.23 189.63,273.60 188.74,274.97 187.83,276.33 186.91,277.70 185.98,279.07 185.04,280.43 184.09,281.80 183.13,283.17 182.16,284.53 181.19,285.90 180.20,287.27 179.20,288.63 178.20,290.00 173.80,290.00 172.80,288.63 171.80,287.27 170.81,285.90 169.84,284.53 168.87,283.17 167.91,281.80 166.96,280.43 166.02,279.07 165.09,277.70 164.17,276.33 163.26,274.97 162.37,273.60 161.48,272.23 160.61,270.87 159.74,269.50 158.89,268.13 158.05,266.77 157.23,265.40 156.42,264.03 155.62,262.67 154.84,261.30 154.08,259.93 153.33,258.57 152.59,257.20 151.88,255.83 151.19,254.47 150.51,253.10 149.86,251.73 149.23,250.37 148.64,249.00 148.07,247.63 147.53,246.27 147.04,244.90 146.59,243.53 146.22,242.17 146.00,240.80 146.03,239.43 146.12,238.07 146.26,236.70 146.45,235.33 146.69,233.97 146.99,232.60 147.34,231.23 147.76,229.87 148.24,228.50 148.78,227.13 149.39,225.77 150.07,224.40 150.84,223.03 151.69,221.67 152.64,220.30 153.69,218.93 154.88,217.57 156.21,216.20 157.72,214.83 159.46,213.47 161.52,212.10 164.05,210.73 167.46,209.37 176.00,208.00' fill='#e8704e'/><clipPath id='g1'><polygon points='176.00,208.00 167.46,209.37 164.05,210.73 161.52,212.10 159.46,213.47 157.72,214.83 156.21,216.20 154.88,217.57 153.69,218.93 152.64,220.30 151.69,221.67 150.84,223.03 150.07,224.40 149.39,225.77 148.78,227.13 148.24,228.50 147.76,229.87 147.34,231.23 146.99,232.60 146.69,233.97 146.45,235.33 146.26,236.70 146.12,238.07 146.03,239.43 146.00,240.80 146.22,242.17 146.59,243.53 147.04,244.90 147.53,246.27 148.07,247.63 148.64,249.00 149.23,250.37 149.86,251.73 150.51,253.10 151.19,254.47 151.88,255.83 152.59,257.20 153.33,258.57 154.08,259.93 154.84,261.30 155.62,262.67 156.42,264.03 157.23,265.40 158.05,266.77 158.89,268.13 159.74,269.50 160.61,270.87 161.48,272.23 162.37,273.60 163.26,274.97 164.17,276.33 165.09,277.70 166.02,279.07 166.96,280.43 167.91,281.80 168.87,283.17 169.84,284.53 170.81,285.90 171.80,287.27 172.80,288.63 173.80,290.00 174.53,290.00 173.86,288.63 173.20,287.27 172.54,285.90 171.89,284.53 171.25,283.17 170.61,281.80 169.97,280.43 169.35,279.07 168.73,277.70 168.12,276.33 167.51,274.97 166.91,273.60 166.32,272.23 165.74,270.87 165.16,269.50 164.60,268.13 164.04,266.77 163.49,265.40 162.95,264.03 162.42,262.67 161.89,261.30 161.38,259.93 160.88,258.57 160.40,257.20 159.92,255.83 159.46,254.47 159.01,253.10 158.57,251.73 158.16,250.37 157.76,249.00 157.38,247.63 157.02,246.27 156.69,244.90 156.39,243.53 156.14,242.17 156.00,240.80 156.02,239.43 156.08,238.07 156.17,236.70 156.30,235.33 156.46,233.97 156.66,232.60 156.90,231.23 157.17,229.87 157.49,228.50 157.85,227.13 158.26,225.77 158.71,224.40 159.22,223.03 159.79,221.67 160.42,220.30 161.13,218.93 161.92,217.57 162.81,216.20 163.81,214.83 164.98,213.47 166.34,212.10 168.03,210.73 170.30,209.37 176.00,208.00'/></clipPath><g clip-path='url(#g1)'><rect x='145.00' y='195.00' width='62.00' height='43.30' fill='#ef824e'/><rect x='145.00' y='238.00' width='62.00' height='8.30' fill='#e64a58'/><rect x='145.00' y='246.00' width='62.00' height='6.30' fill='#34405f'/><rect x='145.00' y='252.00' width='62.00' height='10.30' fill='#f3b063'/><rect x='145.00' y='262.00' width='62.00' height='9.30' fill='#e5495a'/><rect x='145.00' y='271.00' width='62.00' height='5.30' fill='#45395a'/><rect x='145.00' y='276.00' width='62.00' height='24.30' fill='#f0a060'/></g><polyline points='176.00,208.00 167.46,209.37 164.05,210.73 161.52,212.10 159.46,213.47 157.72,214.83 156.21,216.20 154.88,217.57 153.69,218.93 152.64,220.30 151.69,221.67 150.84,223.03 150.07,224.40 149.39,225.77 148.78,227.13 148.24,228.50 147.76,229.87 147.34,231.23 146.99,232.60 146.69,233.97 146.45,235.33 146.26,236.70 146.12,238.07 146.03,239.43 146.00,240.80 146.22,242.17 146.59,243.53 147.04,244.90 147.53,246.27 148.07,247.63 148.64,249.00 149.23,250.37 149.86,251.73 150.51,253.10 151.19,254.47 151.88,255.83 152.59,257.20 153.33,258.57 154.08,259.93 154.84,261.30 155.62,262.67 156.42,264.03 157.23,265.40 158.05,266.77 158.89,268.13 159.74,269.50 160.61,270.87 161.48,272.23 162.37,273.60 163.26,274.97 164.17,276.33 165.09,277.70 166.02,279.07 166.96,280.43 167.91,281.80 168.87,283.17 169.84,284.53 170.81,285.90 171.80,287.27 172.80,288.63 173.80,290.00 174.53,290.00 173.86,288.63 173.20,287.27 172.54,285.90 171.89,284.53 171.25,283.17 170.61,281.80 169.97,280.43 169.35,279.07 168.73,277.70 168.12,276.33 167.51,274.97 166.91,273.60 166.32,272.23 165.74,270.87 165.16,269.50 164.60,268.13 164.04,266.77 163.49,265.40 162.95,264.03 162.42,262.67 161.89,261.30 161.38,259.93 160.88,258.57 160.40,257.20 159.92,255.83 159.46,254.47 159.01,253.10 158.57,251.73 158.16,250.37 157.76,249.00 157.38,247.63 157.02,246.27 156.69,244.90 156.39,243.53 156.14,242.17 156.00,240.80 156.02,239.43 156.08,238.07 156.17,236.70 156.30,235.33 156.46,233.97 156.66,232.60 156.90,231.23 157.17,229.87 157.49,228.50 157.85,227.13 158.26,225.77 158.71,224.40 159.22,223.03 159.79,221.67 160.42,220.30 161.13,218.93 161.92,217.57 162.81,216.20 163.81,214.83 164.98,213.47 166.34,212.10 168.03,210.73 170.30,209.37 176.00,208.00' fill='none' stroke='rgba(60,30,50,0.18)' stroke-width='0.5'/><clipPath id='g2'><polygon points='176.00,208.00 170.30,209.37 168.03,210.73 166.34,212.10 164.98,213.47 163.81,214.83 162.81,216.20 161.92,217.57 161.13,218.93 160.42,220.30 159.79,221.67 159.22,223.03 158.71,224.40 158.26,225.77 157.85,227.13 157.49,228.50 157.17,229.87 156.90,231.23 156.66,232.60 156.46,233.97 156.30,235.33 156.17,236.70 156.08,238.07 156.02,239.43 156.00,240.80 156.14,242.17 156.39,243.53 156.69,244.90 157.02,246.27 157.38,247.63 157.76,249.00 158.16,250.37 158.57,251.73 159.01,253.10 159.46,254.47 159.92,255.83 160.40,257.20 160.88,258.57 161.38,259.93 161.89,261.30 162.42,262.67 162.95,264.03 163.49,265.40 164.04,266.77 164.60,268.13 165.16,269.50 165.74,270.87 166.32,272.23 166.91,273.60 167.51,274.97 168.12,276.33 168.73,277.70 169.35,279.07 169.97,280.43 170.61,281.80 171.25,283.17 171.89,284.53 172.54,285.90 173.20,287.27 173.86,288.63 174.53,290.00 175.27,290.00 174.93,288.63 174.60,287.27 174.27,285.90 173.95,284.53 173.62,283.17 173.30,281.80 172.99,280.43 172.67,279.07 172.36,277.70 172.06,276.33 171.75,274.97 171.46,273.60 171.16,272.23 170.87,270.87 170.58,269.50 170.30,268.13 170.02,266.77 169.74,265.40 169.47,264.03 169.21,262.67 168.95,261.30 168.69,259.93 168.44,258.57 168.20,257.20 167.96,255.83 167.73,254.47 167.50,253.10 167.29,251.73 167.08,250.37 166.88,249.00 166.69,247.63 166.51,246.27 166.35,244.90 166.20,243.53 166.07,242.17 166.00,240.80 166.01,239.43 166.04,238.07 166.09,236.70 166.15,235.33 166.23,233.97 166.33,232.60 166.45,231.23 166.59,229.87 166.75,228.50 166.93,227.13 167.13,225.77 167.36,224.40 167.61,223.03 167.90,221.67 168.21,220.30 168.56,218.93 168.96,217.57 169.40,216.20 169.91,214.83 170.49,213.47 171.17,212.10 172.02,210.73 173.15,209.37 176.00,208.00'/></clipPath><g clip-path='url(#g2)'><rect x='145.00' y='191.50' width='62.00' height='43.30' fill='#ef824e'/><rect x='145.00' y='234.50' width='62.00' height='8.30' fill='#e64a58'/><rect x='145.00' y='242.50' width='62.00' height='6.30' fill='#34405f'/><rect x='145.00' y='248.50' width='62.00' height='10.30' fill='#f3b063'/><rect x='145.00' y='258.50' width='62.00' height='9.30' fill='#e5495a'/><rect x='145.00' y='267.50' width='62.00' height='5.30' fill='#45395a'/><rect x='145.00' y='272.50' width='62.00' height='24.30' fill='#f0a060'/></g><polyline points='176.00,208.00 170.30,209.37 168.03,210.73 166.34,212.10 164.98,213.47 163.81,214.83 162.81,216.20 161.92,217.57 161.13,218.93 160.42,220.30 159.79,221.67 159.22,223.03 158.71,224.40 158.26,225.77 157.85,227.13 157.49,228.50 157.17,229.87 156.90,231.23 156.66,232.60 156.46,233.97 156.30,235.33 156.17,236.70 156.08,238.07 156.02,239.43 156.00,240.80 156.14,242.17 156.39,243.53 156.69,244.90 157.02,246.27 157.38,247.63 157.76,249.00 158.16,250.37 158.57,251.73 159.01,253.10 159.46,254.47 159.92,255.83 160.40,257.20 160.88,258.57 161.38,259.93 161.89,261.30 162.42,262.67 162.95,264.03 163.49,265.40 164.04,266.77 164.60,268.13 165.16,269.50 165.74,270.87 166.32,272.23 166.91,273.60 167.51,274.97 168.12,276.33 168.73,277.70 169.35,279.07 169.97,280.43 170.61,281.80 171.25,283.17 171.89,284.53 172.54,285.90 173.20,287.27 173.86,288.63 174.53,290.00 175.27,290.00 174.93,288.63 174.60,287.27 174.27,285.90 173.95,284.53 173.62,283.17 173.30,281.80 172.99,280.43 172.67,279.07 172.36,277.70 172.06,276.33 171.75,274.97 171.46,273.60 171.16,272.23 170.87,270.87 170.58,269.50 170.30,268.13 170.02,266.77 169.74,265.40 169.47,264.03 169.21,262.67 168.95,261.30 168.69,259.93 168.44,258.57 168.20,257.20 167.96,255.83 167.73,254.47 167.50,253.10 167.29,251.73 167.08,250.37 166.88,249.00 166.69,247.63 166.51,246.27 166.35,244.90 166.20,243.53 166.07,242.17 166.00,240.80 166.01,239.43 166.04,238.07 166.09,236.70 166.15,235.33 166.23,233.97 166.33,232.60 166.45,231.23 166.59,229.87 166.75,228.50 166.93,227.13 167.13,225.77 167.36,224.40 167.61,223.03 167.90,221.67 168.21,220.30 168.56,218.93 168.96,217.57 169.40,216.20 169.91,214.83 170.49,213.47 171.17,212.10 172.02,210.73 173.15,209.37 176.00,208.00' fill='none' stroke='rgba(60,30,50,0.18)' stroke-width='0.5'/><clipPath id='g3'><polygon points='176.00,208.00 173.15,209.37 172.02,210.73 171.17,212.10 170.49,213.47 169.91,214.83 169.40,216.20 168.96,217.57 168.56,218.93 168.21,220.30 167.90,221.67 167.61,223.03 167.36,224.40 167.13,225.77 166.93,227.13 166.75,228.50 166.59,229.87 166.45,231.23 166.33,232.60 166.23,233.97 166.15,235.33 166.09,236.70 166.04,238.07 166.01,239.43 166.00,240.80 166.07,242.17 166.20,243.53 166.35,244.90 166.51,246.27 166.69,247.63 166.88,249.00 167.08,250.37 167.29,251.73 167.50,253.10 167.73,254.47 167.96,255.83 168.20,257.20 168.44,258.57 168.69,259.93 168.95,261.30 169.21,262.67 169.47,264.03 169.74,265.40 170.02,266.77 170.30,268.13 170.58,269.50 170.87,270.87 171.16,272.23 171.46,273.60 171.75,274.97 172.06,276.33 172.36,277.70 172.67,279.07 172.99,280.43 173.30,281.80 173.62,283.17 173.95,284.53 174.27,285.90 174.60,287.27 174.93,288.63 175.27,290.00 176.00,290.00 176.00,288.63 176.00,287.27 176.00,285.90 176.00,284.53 176.00,283.17 176.00,281.80 176.00,280.43 176.00,279.07 176.00,277.70 176.00,276.33 176.00,274.97 176.00,273.60 176.00,272.23 176.00,270.87 176.00,269.50 176.00,268.13 176.00,266.77 176.00,265.40 176.00,264.03 176.00,262.67 176.00,261.30 176.00,259.93 176.00,258.57 176.00,257.20 176.00,255.83 176.00,254.47 176.00,253.10 176.00,251.73 176.00,250.37 176.00,249.00 176.00,247.63 176.00,246.27 176.00,244.90 176.00,243.53 176.00,242.17 176.00,240.80 176.00,239.43 176.00,238.07 176.00,236.70 176.00,235.33 176.00,233.97 176.00,232.60 176.00,231.23 176.00,229.87 176.00,228.50 176.00,227.13 176.00,225.77 176.00,224.40 176.00,223.03 176.00,221.67 176.00,220.30 176.00,218.93 176.00,217.57 176.00,216.20 176.00,214.83 176.00,213.47 176.00,212.10 176.00,210.73 176.00,209.37 176.00,208.00'/></clipPath><g clip-path='url(#g3)'><rect x='145.00' y='195.00' width='62.00' height='43.30' fill='#ef824e'/><rect x='145.00' y='238.00' width='62.00' height='8.30' fill='#e64a58'/><rect x='145.00' y='246.00' width='62.00' height='6.30' fill='#34405f'/><rect x='145.00' y='252.00' width='62.00' height='10.30' fill='#f3b063'/><rect x='145.00' y='262.00' width='62.00' height='9.30' fill='#e5495a'/><rect x='145.00' y='271.00' width='62.00' height='5.30' fill='#45395a'/><rect x='145.00' y='276.00' width='62.00' height='24.30' fill='#f0a060'/></g><polyline points='176.00,208.00 173.15,209.37 172.02,210.73 171.17,212.10 170.49,213.47 169.91,214.83 169.40,216.20 168.96,217.57 168.56,218.93 168.21,220.30 167.90,221.67 167.61,223.03 167.36,224.40 167.13,225.77 166.93,227.13 166.75,228.50 166.59,229.87 166.45,231.23 166.33,232.60 166.23,233.97 166.15,235.33 166.09,236.70 166.04,238.07 166.01,239.43 166.00,240.80 166.07,242.17 166.20,243.53 166.35,244.90 166.51,246.27 166.69,247.63 166.88,249.00 167.08,250.37 167.29,251.73 167.50,253.10 167.73,254.47 167.96,255.83 168.20,257.20 168.44,258.57 168.69,259.93 168.95,261.30 169.21,262.67 169.47,264.03 169.74,265.40 170.02,266.77 170.30,268.13 170.58,269.50 170.87,270.87 171.16,272.23 171.46,273.60 171.75,274.97 172.06,276.33 172.36,277.70 172.67,279.07 172.99,280.43 173.30,281.80 173.62,283.17 173.95,284.53 174.27,285.90 174.60,287.27 174.93,288.63 175.27,290.00 176.00,290.00 176.00,288.63 176.00,287.27 176.00,285.90 176.00,284.53 176.00,283.17 176.00,281.80 176.00,280.43 176.00,279.07 176.00,277.70 176.00,276.33 176.00,274.97 176.00,273.60 176.00,272.23 176.00,270.87 176.00,269.50 176.00,268.13 176.00,266.77 176.00,265.40 176.00,264.03 176.00,262.67 176.00,261.30 176.00,259.93 176.00,258.57 176.00,257.20 176.00,255.83 176.00,254.47 176.00,253.10 176.00,251.73 176.00,250.37 176.00,249.00 176.00,247.63 176.00,246.27 176.00,244.90 176.00,243.53 176.00,242.17 176.00,240.80 176.00,239.43 176.00,238.07 176.00,236.70 176.00,235.33 176.00,233.97 176.00,232.60 176.00,231.23 176.00,229.87 176.00,228.50 176.00,227.13 176.00,225.77 176.00,224.40 176.00,223.03 176.00,221.67 176.00,220.30 176.00,218.93 176.00,217.57 176.00,216.20 176.00,214.83 176.00,213.47 176.00,212.10 176.00,210.73 176.00,209.37 176.00,208.00' fill='none' stroke='rgba(60,30,50,0.18)' stroke-width='0.5'/><clipPath id='g4'><polygon points='176.00,208.00 176.00,209.37 176.00,210.73 176.00,212.10 176.00,213.47 176.00,214.83 176.00,216.20 176.00,217.57 176.00,218.93 176.00,220.30 176.00,221.67 176.00,223.03 176.00,224.40 176.00,225.77 176.00,227.13 176.00,228.50 176.00,229.87 176.00,231.23 176.00,232.60 176.00,233.97 176.00,235.33 176.00,236.70 176.00,238.07 176.00,239.43 176.00,240.80 176.00,242.17 176.00,243.53 176.00,244.90 176.00,246.27 176.00,247.63 176.00,249.00 176.00,250.37 176.00,251.73 176.00,253.10 176.00,254.47 176.00,255.83 176.00,257.20 176.00,258.57 176.00,259.93 176.00,261.30 176.00,262.67 176.00,264.03 176.00,265.40 176.00,266.77 176.00,268.13 176.00,269.50 176.00,270.87 176.00,272.23 176.00,273.60 176.00,274.97 176.00,276.33 176.00,277.70 176.00,279.07 176.00,280.43 176.00,281.80 176.00,283.17 176.00,284.53 176.00,285.90 176.00,287.27 176.00,288.63 176.00,290.00 176.73,290.00 177.07,288.63 177.40,287.27 177.73,285.90 178.05,284.53 178.38,283.17 178.70,281.80 179.01,280.43 179.33,279.07 179.64,277.70 179.94,276.33 180.25,274.97 180.54,273.60 180.84,272.23 181.13,270.87 181.42,269.50 181.70,268.13 181.98,266.77 182.26,265.40 182.53,264.03 182.79,262.67 183.05,261.30 183.31,259.93 183.56,258.57 183.80,257.20 184.04,255.83 184.27,254.47 184.50,253.10 184.71,251.73 184.92,250.37 185.12,249.00 185.31,247.63 185.49,246.27 185.65,244.90 185.80,243.53 185.93,242.17 186.00,240.80 185.99,239.43 185.96,238.07 185.91,236.70 185.85,235.33 185.77,233.97 185.67,232.60 185.55,231.23 185.41,229.87 185.25,228.50 185.07,227.13 184.87,225.77 184.64,224.40 184.39,223.03 184.10,221.67 183.79,220.30 183.44,218.93 183.04,217.57 182.60,216.20 182.09,214.83 181.51,213.47 180.83,212.10 179.98,210.73 178.85,209.37 176.00,208.00'/></clipPath><g clip-path='url(#g4)'><rect x='145.00' y='191.50' width='62.00' height='43.30' fill='#ef824e'/><rect x='145.00' y='234.50' width='62.00' height='8.30' fill='#e64a58'/><rect x='145.00' y='242.50' width='62.00' height='6.30' fill='#34405f'/><rect x='145.00' y='248.50' width='62.00' height='10.30' fill='#f3b063'/><rect x='145.00' y='258.50' width='62.00' height='9.30' fill='#e5495a'/><rect x='145.00' y='267.50' width='62.00' height='5.30' fill='#45395a'/><rect x='145.00' y='272.50' width='62.00' height='24.30' fill='#f0a060'/></g><polyline points='176.00,208.00 176.00,209.37 176.00,210.73 176.00,212.10 176.00,213.47 176.00,214.83 176.00,216.20 176.00,217.57 176.00,218.93 176.00,220.30 176.00,221.67 176.00,223.03 176.00,224.40 176.00,225.77 176.00,227.13 176.00,228.50 176.00,229.87 176.00,231.23 176.00,232.60 176.00,233.97 176.00,235.33 176.00,236.70 176.00,238.07 176.00,239.43 176.00,240.80 176.00,242.17 176.00,243.53 176.00,244.90 176.00,246.27 176.00,247.63 176.00,249.00 176.00,250.37 176.00,251.73 176.00,253.10 176.00,254.47 176.00,255.83 176.00,257.20 176.00,258.57 176.00,259.93 176.00,261.30 176.00,262.67 176.00,264.03 176.00,265.40 176.00,266.77 176.00,268.13 176.00,269.50 176.00,270.87 176.00,272.23 176.00,273.60 176.00,274.97 176.00,276.33 176.00,277.70 176.00,279.07 176.00,280.43 176.00,281.80 176.00,283.17 176.00,284.53 176.00,285.90 176.00,287.27 176.00,288.63 176.00,290.00 176.73,290.00 177.07,288.63 177.40,287.27 177.73,285.90 178.05,284.53 178.38,283.17 178.70,281.80 179.01,280.43 179.33,279.07 179.64,277.70 179.94,276.33 180.25,274.97 180.54,273.60 180.84,272.23 181.13,270.87 181.42,269.50 181.70,268.13 181.98,266.77 182.26,265.40 182.53,264.03 182.79,262.67 183.05,261.30 183.31,259.93 183.56,258.57 183.80,257.20 184.04,255.83 184.27,254.47 184.50,253.10 184.71,251.73 184.92,250.37 185.12,249.00 185.31,247.63 185.49,246.27 185.65,244.90 185.80,243.53 185.93,242.17 186.00,240.80 185.99,239.43 185.96,238.07 185.91,236.70 185.85,235.33 185.77,233.97 185.67,232.60 185.55,231.23 185.41,229.87 185.25,228.50 185.07,227.13 184.87,225.77 184.64,224.40 184.39,223.03 184.10,221.67 183.79,220.30 183.44,218.93 183.04,217.57 182.60,216.20 182.09,214.83 181.51,213.47 180.83,212.10 179.98,210.73 178.85,209.37 176.00,208.00' fill='none' stroke='rgba(60,30,50,0.18)' stroke-width='0.5'/><clipPath id='g5'><polygon points='176.00,208.00 178.85,209.37 179.98,210.73 180.83,212.10 181.51,213.47 182.09,214.83 182.60,216.20 183.04,217.57 183.44,218.93 183.79,220.30 184.10,221.67 184.39,223.03 184.64,224.40 184.87,225.77 185.07,227.13 185.25,228.50 185.41,229.87 185.55,231.23 185.67,232.60 185.77,233.97 185.85,235.33 185.91,236.70 185.96,238.07 185.99,239.43 186.00,240.80 185.93,242.17 185.80,243.53 185.65,244.90 185.49,246.27 185.31,247.63 185.12,249.00 184.92,250.37 184.71,251.73 184.50,253.10 184.27,254.47 184.04,255.83 183.80,257.20 183.56,258.57 183.31,259.93 183.05,261.30 182.79,262.67 182.53,264.03 182.26,265.40 181.98,266.77 181.70,268.13 181.42,269.50 181.13,270.87 180.84,272.23 180.54,273.60 180.25,274.97 179.94,276.33 179.64,277.70 179.33,279.07 179.01,280.43 178.70,281.80 178.38,283.17 178.05,284.53 177.73,285.90 177.40,287.27 177.07,288.63 176.73,290.00 177.47,290.00 178.14,288.63 178.80,287.27 179.46,285.90 180.11,284.53 180.75,283.17 181.39,281.80 182.03,280.43 182.65,279.07 183.27,277.70 183.88,276.33 184.49,274.97 185.09,273.60 185.68,272.23 186.26,270.87 186.84,269.50 187.40,268.13 187.96,266.77 188.51,265.40 189.05,264.03 189.58,262.67 190.11,261.30 190.62,259.93 191.12,258.57 191.60,257.20 192.08,255.83 192.54,254.47 192.99,253.10 193.43,251.73 193.84,250.37 194.24,249.00 194.62,247.63 194.98,246.27 195.31,244.90 195.61,243.53 195.86,242.17 196.00,240.80 195.98,239.43 195.92,238.07 195.83,236.70 195.70,235.33 195.54,233.97 195.34,232.60 195.10,231.23 194.83,229.87 194.51,228.50 194.15,227.13 193.74,225.77 193.29,224.40 192.78,223.03 192.21,221.67 191.58,220.30 190.87,218.93 190.08,217.57 189.19,216.20 188.19,214.83 187.02,213.47 185.66,212.10 183.97,210.73 181.70,209.37 176.00,208.00'/></clipPath><g clip-path='url(#g5)'><rect x='145.00' y='195.00' width='62.00' height='43.30' fill='#ef824e'/><rect x='145.00' y='238.00' width='62.00' height='8.30' fill='#e64a58'/><rect x='145.00' y='246.00' width='62.00' height='6.30' fill='#34405f'/><rect x='145.00' y='252.00' width='62.00' height='10.30' fill='#f3b063'/><rect x='145.00' y='262.00' width='62.00' height='9.30' fill='#e5495a'/><rect x='145.00' y='271.00' width='62.00' height='5.30' fill='#45395a'/><rect x='145.00' y='276.00' width='62.00' height='24.30' fill='#f0a060'/></g><polyline points='176.00,208.00 178.85,209.37 179.98,210.73 180.83,212.10 181.51,213.47 182.09,214.83 182.60,216.20 183.04,217.57 183.44,218.93 183.79,220.30 184.10,221.67 184.39,223.03 184.64,224.40 184.87,225.77 185.07,227.13 185.25,228.50 185.41,229.87 185.55,231.23 185.67,232.60 185.77,233.97 185.85,235.33 185.91,236.70 185.96,238.07 185.99,239.43 186.00,240.80 185.93,242.17 185.80,243.53 185.65,244.90 185.49,246.27 185.31,247.63 185.12,249.00 184.92,250.37 184.71,251.73 184.50,253.10 184.27,254.47 184.04,255.83 183.80,257.20 183.56,258.57 183.31,259.93 183.05,261.30 182.79,262.67 182.53,264.03 182.26,265.40 181.98,266.77 181.70,268.13 181.42,269.50 181.13,270.87 180.84,272.23 180.54,273.60 180.25,274.97 179.94,276.33 179.64,277.70 179.33,279.07 179.01,280.43 178.70,281.80 178.38,283.17 178.05,284.53 177.73,285.90 177.40,287.27 177.07,288.63 176.73,290.00 177.47,290.00 178.14,288.63 178.80,287.27 179.46,285.90 180.11,284.53 180.75,283.17 181.39,281.80 182.03,280.43 182.65,279.07 183.27,277.70 183.88,276.33 184.49,274.97 185.09,273.60 185.68,272.23 186.26,270.87 186.84,269.50 187.40,268.13 187.96,266.77 188.51,265.40 189.05,264.03 189.58,262.67 190.11,261.30 190.62,259.93 191.12,258.57 191.60,257.20 192.08,255.83 192.54,254.47 192.99,253.10 193.43,251.73 193.84,250.37 194.24,249.00 194.62,247.63 194.98,246.27 195.31,244.90 195.61,243.53 195.86,242.17 196.00,240.80 195.98,239.43 195.92,238.07 195.83,236.70 195.70,235.33 195.54,233.97 195.34,232.60 195.10,231.23 194.83,229.87 194.51,228.50 194.15,227.13 193.74,225.77 193.29,224.40 192.78,223.03 192.21,221.67 191.58,220.30 190.87,218.93 190.08,217.57 189.19,216.20 188.19,214.83 187.02,213.47 185.66,212.10 183.97,210.73 181.70,209.37 176.00,208.00' fill='none' stroke='rgba(60,30,50,0.18)' stroke-width='0.5'/><clipPath id='g6'><polygon points='176.00,208.00 181.70,209.37 183.97,210.73 185.66,212.10 187.02,213.47 188.19,214.83 189.19,216.20 190.08,217.57 190.87,218.93 191.58,220.30 192.21,221.67 192.78,223.03 193.29,224.40 193.74,225.77 194.15,227.13 194.51,228.50 194.83,229.87 195.10,231.23 195.34,232.60 195.54,233.97 195.70,235.33 195.83,236.70 195.92,238.07 195.98,239.43 196.00,240.80 195.86,242.17 195.61,243.53 195.31,244.90 194.98,246.27 194.62,247.63 194.24,249.00 193.84,250.37 193.43,251.73 192.99,253.10 192.54,254.47 192.08,255.83 191.60,257.20 191.12,258.57 190.62,259.93 190.11,261.30 189.58,262.67 189.05,264.03 188.51,265.40 187.96,266.77 187.40,268.13 186.84,269.50 186.26,270.87 185.68,272.23 185.09,273.60 184.49,274.97 183.88,276.33 183.27,277.70 182.65,279.07 182.03,280.43 181.39,281.80 180.75,283.17 180.11,284.53 179.46,285.90 178.80,287.27 178.14,288.63 177.47,290.00 178.20,290.00 179.20,288.63 180.20,287.27 181.19,285.90 182.16,284.53 183.13,283.17 184.09,281.80 185.04,280.43 185.98,279.07 186.91,277.70 187.83,276.33 188.74,274.97 189.63,273.60 190.52,272.23 191.39,270.87 192.26,269.50 193.11,268.13 193.95,266.77 194.77,265.40 195.58,264.03 196.38,262.67 197.16,261.30 197.92,259.93 198.67,258.57 199.41,257.20 200.12,255.83 200.81,254.47 201.49,253.10 202.14,251.73 202.77,250.37 203.36,249.00 203.93,247.63 204.47,246.27 204.96,244.90 205.41,243.53 205.78,242.17 206.00,240.80 205.97,239.43 205.88,238.07 205.74,236.70 205.55,235.33 205.31,233.97 205.01,232.60 204.66,231.23 204.24,229.87 203.76,228.50 203.22,227.13 202.61,225.77 201.93,224.40 201.16,223.03 200.31,221.67 199.36,220.30 198.31,218.93 197.12,217.57 195.79,216.20 194.28,214.83 192.54,213.47 190.48,212.10 187.95,210.73 184.54,209.37 176.00,208.00'/></clipPath><g clip-path='url(#g6)'><rect x='145.00' y='191.50' width='62.00' height='43.30' fill='#ef824e'/><rect x='145.00' y='234.50' width='62.00' height='8.30' fill='#e64a58'/><rect x='145.00' y='242.50' width='62.00' height='6.30' fill='#34405f'/><rect x='145.00' y='248.50' width='62.00' height='10.30' fill='#f3b063'/><rect x='145.00' y='258.50' width='62.00' height='9.30' fill='#e5495a'/><rect x='145.00' y='267.50' width='62.00' height='5.30' fill='#45395a'/><rect x='145.00' y='272.50' width='62.00' height='24.30' fill='#f0a060'/></g><polyline points='176.00,208.00 181.70,209.37 183.97,210.73 185.66,212.10 187.02,213.47 188.19,214.83 189.19,216.20 190.08,217.57 190.87,218.93 191.58,220.30 192.21,221.67 192.78,223.03 193.29,224.40 193.74,225.77 194.15,227.13 194.51,228.50 194.83,229.87 195.10,231.23 195.34,232.60 195.54,233.97 195.70,235.33 195.83,236.70 195.92,238.07 195.98,239.43 196.00,240.80 195.86,242.17 195.61,243.53 195.31,244.90 194.98,246.27 194.62,247.63 194.24,249.00 193.84,250.37 193.43,251.73 192.99,253.10 192.54,254.47 192.08,255.83 191.60,257.20 191.12,258.57 190.62,259.93 190.11,261.30 189.58,262.67 189.05,264.03 188.51,265.40 187.96,266.77 187.40,268.13 186.84,269.50 186.26,270.87 185.68,272.23 185.09,273.60 184.49,274.97 183.88,276.33 183.27,277.70 182.65,279.07 182.03,280.43 181.39,281.80 180.75,283.17 180.11,284.53 179.46,285.90 178.80,287.27 178.14,288.63 177.47,290.00 178.20,290.00 179.20,288.63 180.20,287.27 181.19,285.90 182.16,284.53 183.13,283.17 184.09,281.80 185.04,280.43 185.98,279.07 186.91,277.70 187.83,276.33 188.74,274.97 189.63,273.60 190.52,272.23 191.39,270.87 192.26,269.50 193.11,268.13 193.95,266.77 194.77,265.40 195.58,264.03 196.38,262.67 197.16,261.30 197.92,259.93 198.67,258.57 199.41,257.20 200.12,255.83 200.81,254.47 201.49,253.10 202.14,251.73 202.77,250.37 203.36,249.00 203.93,247.63 204.47,246.27 204.96,244.90 205.41,243.53 205.78,242.17 206.00,240.80 205.97,239.43 205.88,238.07 205.74,236.70 205.55,235.33 205.31,233.97 205.01,232.60 204.66,231.23 204.24,229.87 203.76,228.50 203.22,227.13 202.61,225.77 201.93,224.40 201.16,223.03 200.31,221.67 199.36,220.30 198.31,218.93 197.12,217.57 195.79,216.20 194.28,214.83 192.54,213.47 190.48,212.10 187.95,210.73 184.54,209.37 176.00,208.00' fill='none' stroke='rgba(60,30,50,0.18)' stroke-width='0.5'/><clipPath id='e7'><polygon points='176.00,208.00 184.54,209.37 187.95,210.73 190.48,212.10 192.54,213.47 194.28,214.83 195.79,216.20 197.12,217.57 198.31,218.93 199.36,220.30 200.31,221.67 201.16,223.03 201.93,224.40 202.61,225.77 203.22,227.13 203.76,228.50 204.24,229.87 204.66,231.23 205.01,232.60 205.31,233.97 205.55,235.33 205.74,236.70 205.88,238.07 205.97,239.43 206.00,240.80 205.78,242.17 205.41,243.53 204.96,244.90 204.47,246.27 203.93,247.63 203.36,249.00 202.77,250.37 202.14,251.73 201.49,253.10 200.81,254.47 200.12,255.83 199.41,257.20 198.67,258.57 197.92,259.93 197.16,261.30 196.38,262.67 195.58,264.03 194.77,265.40 193.95,266.77 193.11,268.13 192.26,269.50 191.39,270.87 190.52,272.23 189.63,273.60 188.74,274.97 187.83,276.33 186.91,277.70 185.98,279.07 185.04,280.43 184.09,281.80 183.13,283.17 182.16,284.53 181.19,285.90 180.20,287.27 179.20,288.63 178.20,290.00 173.80,290.00 172.80,288.63 171.80,287.27 170.81,285.90 169.84,284.53 168.87,283.17 167.91,281.80 166.96,280.43 166.02,279.07 165.09,277.70 164.17,276.33 163.26,274.97 162.37,273.60 161.48,272.23 160.61,270.87 159.74,269.50 158.89,268.13 158.05,266.77 157.23,265.40 156.42,264.03 155.62,262.67 154.84,261.30 154.08,259.93 153.33,258.57 152.59,257.20 151.88,255.83 151.19,254.47 150.51,253.10 149.86,251.73 149.23,250.37 148.64,249.00 148.07,247.63 147.53,246.27 147.04,244.90 146.59,243.53 146.22,242.17 146.00,240.80 146.03,239.43 146.12,238.07 146.26,236.70 146.45,235.33 146.69,233.97 146.99,232.60 147.34,231.23 147.76,229.87 148.24,228.50 148.78,227.13 149.39,225.77 150.07,224.40 150.84,223.03 151.69,221.67 152.64,220.30 153.69,218.93 154.88,217.57 156.21,216.20 157.72,214.83 159.46,213.47 161.52,212.10 164.05,210.73 167.46,209.37 176.00,208.00'/></clipPath><g clip-path='url(#e7)'><ellipse cx='162.50' cy='241.00' rx='12.00' ry='36.90' fill='rgba(255,255,255,0.10)'/><ellipse cx='197.00' cy='246.00' rx='10.50' ry='41.00' fill='rgba(0,0,0,0.12)'/></g></g><path d='M174.3,290 L173.8,292.5 M177.7,290 L178.2,292.5' stroke='#444' stroke-width='0.3'/><rect x='174' y='292' width='4' height='5' fill='#1e2630'/><g transform='rotate(-9 311 318.5)'><polygon points='311.00,264.00 317.25,264.91 319.75,265.82 321.59,266.73 323.09,267.63 324.35,268.54 325.45,269.45 326.41,270.36 327.27,271.27 328.02,272.18 328.70,273.08 329.31,273.99 329.85,274.90 330.33,275.81 330.76,276.72 331.13,277.62 331.46,278.53 331.73,279.44 331.97,280.35 332.16,281.26 332.30,282.17 332.41,283.07 332.47,283.98 332.50,284.89 332.35,285.80 332.09,286.71 331.78,287.62 331.45,288.52 331.08,289.43 330.69,290.34 330.28,291.25 329.85,292.16 329.41,293.07 328.94,293.98 328.47,294.88 327.98,295.79 327.48,296.70 326.97,297.61 326.45,298.52 325.91,299.43 325.37,300.33 324.81,301.24 324.25,302.15 323.68,303.06 323.10,303.97 322.51,304.88 321.91,305.78 321.30,306.69 320.69,307.60 320.07,308.51 319.44,309.42 318.81,310.32 318.16,311.23 317.52,312.14 316.86,313.05 316.20,313.96 315.53,314.87 314.86,315.77 314.18,316.68 313.49,317.59 312.80,318.50 309.20,318.50 308.51,317.59 307.82,316.68 307.14,315.77 306.47,314.87 305.80,313.96 305.14,313.05 304.48,312.14 303.84,311.23 303.19,310.32 302.56,309.42 301.93,308.51 301.31,307.60 300.70,306.69 300.09,305.78 299.49,304.88 298.90,303.97 298.32,303.06 297.75,302.15 297.19,301.24 296.63,300.33 296.09,299.43 295.55,298.52 295.03,297.61 294.52,296.70 294.02,295.79 293.53,294.88 293.06,293.98 292.59,293.07 292.15,292.16 291.72,291.25 291.31,290.34 290.92,289.43 290.55,288.52 290.22,287.62 289.91,286.71 289.65,285.80 289.50,284.89 289.53,283.98 289.59,283.07 289.70,282.17 289.84,281.26 290.03,280.35 290.27,279.44 290.54,278.53 290.87,277.62 291.24,276.72 291.67,275.81 292.15,274.90 292.69,273.99 293.30,273.08 293.98,272.18 294.73,271.27 295.59,270.36 296.55,269.45 297.65,268.54 298.91,267.63 300.41,266.73 302.25,265.82 304.75,264.91 311.00,264.00' fill='#2c2b33'/><clipPath id='g8'><polygon points='311.00,264.00 304.75,264.91 302.25,265.82 300.41,266.73 298.91,267.63 297.65,268.54 296.55,269.45 295.59,270.36 294.73,271.27 293.98,272.18 293.30,273.08 292.69,273.99 292.15,274.90 291.67,275.81 291.24,276.72 290.87,277.62 290.54,278.53 290.27,279.44 290.03,280.35 289.84,281.26 289.70,282.17 289.59,283.07 289.53,283.98 289.50,284.89 289.65,285.80 289.91,286.71 290.22,287.62 290.55,288.52 290.92,289.43 291.31,290.34 291.72,291.25 292.15,292.16 292.59,293.07 293.06,293.98 293.53,294.88 294.02,295.79 294.52,296.70 295.03,297.61 295.55,298.52 296.09,299.43 296.63,300.33 297.19,301.24 297.75,302.15 298.32,303.06 298.90,303.97 299.49,304.88 300.09,305.78 300.70,306.69 301.31,307.60 301.93,308.51 302.56,309.42 303.19,310.32 303.84,311.23 304.48,312.14 305.14,313.05 305.80,313.96 306.47,314.87 307.14,315.77 307.82,316.68 308.51,317.59 309.20,318.50 309.92,318.50 309.51,317.59 309.09,316.68 308.69,315.77 308.28,314.87 307.88,313.96 307.48,313.05 307.09,312.14 306.70,311.23 306.32,310.32 305.94,309.42 305.56,308.51 305.19,307.60 304.82,306.69 304.45,305.78 304.10,304.88 303.74,303.97 303.39,303.06 303.05,302.15 302.71,301.24 302.38,300.33 302.05,299.43 301.73,298.52 301.42,297.61 301.11,296.70 300.81,295.79 300.52,294.88 300.23,293.98 299.96,293.07 299.69,292.16 299.43,291.25 299.19,290.34 298.95,289.43 298.73,288.52 298.53,287.62 298.35,286.71 298.19,285.80 298.10,284.89 298.12,283.98 298.15,283.07 298.22,282.17 298.31,281.26 298.42,280.35 298.56,279.44 298.73,278.53 298.92,277.62 299.15,276.72 299.40,275.81 299.69,274.90 300.01,273.99 300.38,273.08 300.79,272.18 301.24,271.27 301.75,270.36 302.33,269.45 302.99,268.54 303.75,267.63 304.65,266.73 305.75,265.82 307.25,264.91 311.00,264.00'/></clipPath><g clip-path='url(#g8)'><rect x='288.50' y='250.00' width='45.00' height='34.30' fill='#2c2b33'/><rect x='288.50' y='284.00' width='45.00' height='5.30' fill='#ead0a8'/><rect x='288.50' y='289.00' width='45.00' height='5.30' fill='#e87a86'/><rect x='288.50' y='294.00' width='45.00' height='4.30' fill='#eea474'/><rect x='288.50' y='298.00' width='45.00' height='32.30' fill='#2e2c36'/></g><polyline points='311.00,264.00 304.75,264.91 302.25,265.82 300.41,266.73 298.91,267.63 297.65,268.54 296.55,269.45 295.59,270.36 294.73,271.27 293.98,272.18 293.30,273.08 292.69,273.99 292.15,274.90 291.67,275.81 291.24,276.72 290.87,277.62 290.54,278.53 290.27,279.44 290.03,280.35 289.84,281.26 289.70,282.17 289.59,283.07 289.53,283.98 289.50,284.89 289.65,285.80 289.91,286.71 290.22,287.62 290.55,288.52 290.92,289.43 291.31,290.34 291.72,291.25 292.15,292.16 292.59,293.07 293.06,293.98 293.53,294.88 294.02,295.79 294.52,296.70 295.03,297.61 295.55,298.52 296.09,299.43 296.63,300.33 297.19,301.24 297.75,302.15 298.32,303.06 298.90,303.97 299.49,304.88 300.09,305.78 300.70,306.69 301.31,307.60 301.93,308.51 302.56,309.42 303.19,310.32 303.84,311.23 304.48,312.14 305.14,313.05 305.80,313.96 306.47,314.87 307.14,315.77 307.82,316.68 308.51,317.59 309.20,318.50 309.92,318.50 309.51,317.59 309.09,316.68 308.69,315.77 308.28,314.87 307.88,313.96 307.48,313.05 307.09,312.14 306.70,311.23 306.32,310.32 305.94,309.42 305.56,308.51 305.19,307.60 304.82,306.69 304.45,305.78 304.10,304.88 303.74,303.97 303.39,303.06 303.05,302.15 302.71,301.24 302.38,300.33 302.05,299.43 301.73,298.52 301.42,297.61 301.11,296.70 300.81,295.79 300.52,294.88 300.23,293.98 299.96,293.07 299.69,292.16 299.43,291.25 299.19,290.34 298.95,289.43 298.73,288.52 298.53,287.62 298.35,286.71 298.19,285.80 298.10,284.89 298.12,283.98 298.15,283.07 298.22,282.17 298.31,281.26 298.42,280.35 298.56,279.44 298.73,278.53 298.92,277.62 299.15,276.72 299.40,275.81 299.69,274.90 300.01,273.99 300.38,273.08 300.79,272.18 301.24,271.27 301.75,270.36 302.33,269.45 302.99,268.54 303.75,267.63 304.65,266.73 305.75,265.82 307.25,264.91 311.00,264.00' fill='none' stroke='rgba(255,255,255,0.08)' stroke-width='0.5'/><clipPath id='g9'><polygon points='311.00,264.00 307.25,264.91 305.75,265.82 304.65,266.73 303.75,267.63 302.99,268.54 302.33,269.45 301.75,270.36 301.24,271.27 300.79,272.18 300.38,273.08 300.01,273.99 299.69,274.90 299.40,275.81 299.15,276.72 298.92,277.62 298.73,278.53 298.56,279.44 298.42,280.35 298.31,281.26 298.22,282.17 298.15,283.07 298.12,283.98 298.10,284.89 298.19,285.80 298.35,286.71 298.53,287.62 298.73,288.52 298.95,289.43 299.19,290.34 299.43,291.25 299.69,292.16 299.96,293.07 300.23,293.98 300.52,294.88 300.81,295.79 301.11,296.70 301.42,297.61 301.73,298.52 302.05,299.43 302.38,300.33 302.71,301.24 303.05,302.15 303.39,303.06 303.74,303.97 304.10,304.88 304.45,305.78 304.82,306.69 305.19,307.60 305.56,308.51 305.94,309.42 306.32,310.32 306.70,311.23 307.09,312.14 307.48,313.05 307.88,313.96 308.28,314.87 308.69,315.77 309.09,316.68 309.51,317.59 309.92,318.50 310.64,318.50 310.50,317.59 310.36,316.68 310.23,315.77 310.09,314.87 309.96,313.96 309.83,313.05 309.70,312.14 309.57,311.23 309.44,310.32 309.31,309.42 309.19,308.51 309.06,307.60 308.94,306.69 308.82,305.78 308.70,304.88 308.58,303.97 308.46,303.06 308.35,302.15 308.24,301.24 308.13,300.33 308.02,299.43 307.91,298.52 307.81,297.61 307.70,296.70 307.60,295.79 307.51,294.88 307.41,293.98 307.32,293.07 307.23,292.16 307.14,291.25 307.06,290.34 306.98,289.43 306.91,288.52 306.84,287.62 306.78,286.71 306.73,285.80 306.70,284.89 306.71,283.98 306.72,283.07 306.74,282.17 306.77,281.26 306.81,280.35 306.85,279.44 306.91,278.53 306.97,277.62 307.05,276.72 307.13,275.81 307.23,274.90 307.34,273.99 307.46,273.08 307.60,272.18 307.75,271.27 307.92,270.36 308.11,269.45 308.33,268.54 308.58,267.63 308.88,266.73 309.25,265.82 309.75,264.91 311.00,264.00'/></clipPath><g clip-path='url(#g9)'><rect x='288.50' y='247.00' width='45.00' height='34.30' fill='#2c2b33'/><rect x='288.50' y='281.00' width='45.00' height='5.30' fill='#ead0a8'/><rect x='288.50' y='286.00' width='45.00' height='5.30' fill='#e87a86'/><rect x='288.50' y='291.00' width='45.00' height='4.30' fill='#eea474'/><rect x='288.50' y='295.00' width='45.00' height='32.30' fill='#2e2c36'/></g><polyline points='311.00,264.00 307.25,264.91 305.75,265.82 304.65,266.73 303.75,267.63 302.99,268.54 302.33,269.45 301.75,270.36 301.24,271.27 300.79,272.18 300.38,273.08 300.01,273.99 299.69,274.90 299.40,275.81 299.15,276.72 298.92,277.62 298.73,278.53 298.56,279.44 298.42,280.35 298.31,281.26 298.22,282.17 298.15,283.07 298.12,283.98 298.10,284.89 298.19,285.80 298.35,286.71 298.53,287.62 298.73,288.52 298.95,289.43 299.19,290.34 299.43,291.25 299.69,292.16 299.96,293.07 300.23,293.98 300.52,294.88 300.81,295.79 301.11,296.70 301.42,297.61 301.73,298.52 302.05,299.43 302.38,300.33 302.71,301.24 303.05,302.15 303.39,303.06 303.74,303.97 304.10,304.88 304.45,305.78 304.82,306.69 305.19,307.60 305.56,308.51 305.94,309.42 306.32,310.32 306.70,311.23 307.09,312.14 307.48,313.05 307.88,313.96 308.28,314.87 308.69,315.77 309.09,316.68 309.51,317.59 309.92,318.50 310.64,318.50 310.50,317.59 310.36,316.68 310.23,315.77 310.09,314.87 309.96,313.96 309.83,313.05 309.70,312.14 309.57,311.23 309.44,310.32 309.31,309.42 309.19,308.51 309.06,307.60 308.94,306.69 308.82,305.78 308.70,304.88 308.58,303.97 308.46,303.06 308.35,302.15 308.24,301.24 308.13,300.33 308.02,299.43 307.91,298.52 307.81,297.61 307.70,296.70 307.60,295.79 307.51,294.88 307.41,293.98 307.32,293.07 307.23,292.16 307.14,291.25 307.06,290.34 306.98,289.43 306.91,288.52 306.84,287.62 306.78,286.71 306.73,285.80 306.70,284.89 306.71,283.98 306.72,283.07 306.74,282.17 306.77,281.26 306.81,280.35 306.85,279.44 306.91,278.53 306.97,277.62 307.05,276.72 307.13,275.81 307.23,274.90 307.34,273.99 307.46,273.08 307.60,272.18 307.75,271.27 307.92,270.36 308.11,269.45 308.33,268.54 308.58,267.63 308.88,266.73 309.25,265.82 309.75,264.91 311.00,264.00' fill='none' stroke='rgba(255,255,255,0.08)' stroke-width='0.5'/><clipPath id='g10'><polygon points='311.00,264.00 309.75,264.91 309.25,265.82 308.88,266.73 308.58,267.63 308.33,268.54 308.11,269.45 307.92,270.36 307.75,271.27 307.60,272.18 307.46,273.08 307.34,273.99 307.23,274.90 307.13,275.81 307.05,276.72 306.97,277.62 306.91,278.53 306.85,279.44 306.81,280.35 306.77,281.26 306.74,282.17 306.72,283.07 306.71,283.98 306.70,284.89 306.73,285.80 306.78,286.71 306.84,287.62 306.91,288.52 306.98,289.43 307.06,290.34 307.14,291.25 307.23,292.16 307.32,293.07 307.41,293.98 307.51,294.88 307.60,295.79 307.70,296.70 307.81,297.61 307.91,298.52 308.02,299.43 308.13,300.33 308.24,301.24 308.35,302.15 308.46,303.06 308.58,303.97 308.70,304.88 308.82,305.78 308.94,306.69 309.06,307.60 309.19,308.51 309.31,309.42 309.44,310.32 309.57,311.23 309.70,312.14 309.83,313.05 309.96,313.96 310.09,314.87 310.23,315.77 310.36,316.68 310.50,317.59 310.64,318.50 311.36,318.50 311.50,317.59 311.64,316.68 311.77,315.77 311.91,314.87 312.04,313.96 312.17,313.05 312.30,312.14 312.43,311.23 312.56,310.32 312.69,309.42 312.81,308.51 312.94,307.60 313.06,306.69 313.18,305.78 313.30,304.88 313.42,303.97 313.54,303.06 313.65,302.15 313.76,301.24 313.87,300.33 313.98,299.43 314.09,298.52 314.19,297.61 314.30,296.70 314.40,295.79 314.49,294.88 314.59,293.98 314.68,293.07 314.77,292.16 314.86,291.25 314.94,290.34 315.02,289.43 315.09,288.52 315.16,287.62 315.22,286.71 315.27,285.80 315.30,284.89 315.29,283.98 315.28,283.07 315.26,282.17 315.23,281.26 315.19,280.35 315.15,279.44 315.09,278.53 315.03,277.62 314.95,276.72 314.87,275.81 314.77,274.90 314.66,273.99 314.54,273.08 314.40,272.18 314.25,271.27 314.08,270.36 313.89,269.45 313.67,268.54 313.42,267.63 313.12,266.73 312.75,265.82 312.25,264.91 311.00,264.00'/></clipPath><g clip-path='url(#g10)'><rect x='288.50' y='244.00' width='45.00' height='34.30' fill='#2c2b33'/><rect x='288.50' y='278.00' width='45.00' height='5.30' fill='#ead0a8'/><rect x='288.50' y='283.00' width='45.00' height='5.30' fill='#e87a86'/><rect x='288.50' y='288.00' width='45.00' height='4.30' fill='#eea474'/><rect x='288.50' y='292.00' width='45.00' height='32.30' fill='#2e2c36'/></g><polyline points='311.00,264.00 309.75,264.91 309.25,265.82 308.88,266.73 308.58,267.63 308.33,268.54 308.11,269.45 307.92,270.36 307.75,271.27 307.60,272.18 307.46,273.08 307.34,273.99 307.23,274.90 307.13,275.81 307.05,276.72 306.97,277.62 306.91,278.53 306.85,279.44 306.81,280.35 306.77,281.26 306.74,282.17 306.72,283.07 306.71,283.98 306.70,284.89 306.73,285.80 306.78,286.71 306.84,287.62 306.91,288.52 306.98,289.43 307.06,290.34 307.14,291.25 307.23,292.16 307.32,293.07 307.41,293.98 307.51,294.88 307.60,295.79 307.70,296.70 307.81,297.61 307.91,298.52 308.02,299.43 308.13,300.33 308.24,301.24 308.35,302.15 308.46,303.06 308.58,303.97 308.70,304.88 308.82,305.78 308.94,306.69 309.06,307.60 309.19,308.51 309.31,309.42 309.44,310.32 309.57,311.23 309.70,312.14 309.83,313.05 309.96,313.96 310.09,314.87 310.23,315.77 310.36,316.68 310.50,317.59 310.64,318.50 311.36,318.50 311.50,317.59 311.64,316.68 311.77,315.77 311.91,314.87 312.04,313.96 312.17,313.05 312.30,312.14 312.43,311.23 312.56,310.32 312.69,309.42 312.81,308.51 312.94,307.60 313.06,306.69 313.18,305.78 313.30,304.88 313.42,303.97 313.54,303.06 313.65,302.15 313.76,301.24 313.87,300.33 313.98,299.43 314.09,298.52 314.19,297.61 314.30,296.70 314.40,295.79 314.49,294.88 314.59,293.98 314.68,293.07 314.77,292.16 314.86,291.25 314.94,290.34 315.02,289.43 315.09,288.52 315.16,287.62 315.22,286.71 315.27,285.80 315.30,284.89 315.29,283.98 315.28,283.07 315.26,282.17 315.23,281.26 315.19,280.35 315.15,279.44 315.09,278.53 315.03,277.62 314.95,276.72 314.87,275.81 314.77,274.90 314.66,273.99 314.54,273.08 314.40,272.18 314.25,271.27 314.08,270.36 313.89,269.45 313.67,268.54 313.42,267.63 313.12,266.73 312.75,265.82 312.25,264.91 311.00,264.00' fill='none' stroke='rgba(255,255,255,0.08)' stroke-width='0.5'/><clipPath id='g11'><polygon points='311.00,264.00 312.25,264.91 312.75,265.82 313.12,266.73 313.42,267.63 313.67,268.54 313.89,269.45 314.08,270.36 314.25,271.27 314.40,272.18 314.54,273.08 314.66,273.99 314.77,274.90 314.87,275.81 314.95,276.72 315.03,277.62 315.09,278.53 315.15,279.44 315.19,280.35 315.23,281.26 315.26,282.17 315.28,283.07 315.29,283.98 315.30,284.89 315.27,285.80 315.22,286.71 315.16,287.62 315.09,288.52 315.02,289.43 314.94,290.34 314.86,291.25 314.77,292.16 314.68,293.07 314.59,293.98 314.49,294.88 314.40,295.79 314.30,296.70 314.19,297.61 314.09,298.52 313.98,299.43 313.87,300.33 313.76,301.24 313.65,302.15 313.54,303.06 313.42,303.97 313.30,304.88 313.18,305.78 313.06,306.69 312.94,307.60 312.81,308.51 312.69,309.42 312.56,310.32 312.43,311.23 312.30,312.14 312.17,313.05 312.04,313.96 311.91,314.87 311.77,315.77 311.64,316.68 311.50,317.59 311.36,318.50 312.08,318.50 312.49,317.59 312.91,316.68 313.31,315.77 313.72,314.87 314.12,313.96 314.52,313.05 314.91,312.14 315.30,311.23 315.68,310.32 316.06,309.42 316.44,308.51 316.81,307.60 317.18,306.69 317.55,305.78 317.90,304.88 318.26,303.97 318.61,303.06 318.95,302.15 319.29,301.24 319.62,300.33 319.95,299.43 320.27,298.52 320.58,297.61 320.89,296.70 321.19,295.79 321.48,294.88 321.77,293.98 322.04,293.07 322.31,292.16 322.57,291.25 322.81,290.34 323.05,289.43 323.27,288.52 323.47,287.62 323.65,286.71 323.81,285.80 323.90,284.89 323.88,283.98 323.85,283.07 323.78,282.17 323.69,281.26 323.58,280.35 323.44,279.44 323.27,278.53 323.08,277.62 322.85,276.72 322.60,275.81 322.31,274.90 321.99,273.99 321.62,273.08 321.21,272.18 320.76,271.27 320.25,270.36 319.67,269.45 319.01,268.54 318.25,267.63 317.35,266.73 316.25,265.82 314.75,264.91 311.00,264.00'/></clipPath><g clip-path='url(#g11)'><rect x='288.50' y='241.00' width='45.00' height='34.30' fill='#2c2b33'/><rect x='288.50' y='275.00' width='45.00' height='5.30' fill='#ead0a8'/><rect x='288.50' y='280.00' width='45.00' height='5.30' fill='#e87a86'/><rect x='288.50' y='285.00' width='45.00' height='4.30' fill='#eea474'/><rect x='288.50' y='289.00' width='45.00' height='32.30' fill='#2e2c36'/></g><polyline points='311.00,264.00 312.25,264.91 312.75,265.82 313.12,266.73 313.42,267.63 313.67,268.54 313.89,269.45 314.08,270.36 314.25,271.27 314.40,272.18 314.54,273.08 314.66,273.99 314.77,274.90 314.87,275.81 314.95,276.72 315.03,277.62 315.09,278.53 315.15,279.44 315.19,280.35 315.23,281.26 315.26,282.17 315.28,283.07 315.29,283.98 315.30,284.89 315.27,285.80 315.22,286.71 315.16,287.62 315.09,288.52 315.02,289.43 314.94,290.34 314.86,291.25 314.77,292.16 314.68,293.07 314.59,293.98 314.49,294.88 314.40,295.79 314.30,296.70 314.19,297.61 314.09,298.52 313.98,299.43 313.87,300.33 313.76,301.24 313.65,302.15 313.54,303.06 313.42,303.97 313.30,304.88 313.18,305.78 313.06,306.69 312.94,307.60 312.81,308.51 312.69,309.42 312.56,310.32 312.43,311.23 312.30,312.14 312.17,313.05 312.04,313.96 311.91,314.87 311.77,315.77 311.64,316.68 311.50,317.59 311.36,318.50 312.08,318.50 312.49,317.59 312.91,316.68 313.31,315.77 313.72,314.87 314.12,313.96 314.52,313.05 314.91,312.14 315.30,311.23 315.68,310.32 316.06,309.42 316.44,308.51 316.81,307.60 317.18,306.69 317.55,305.78 317.90,304.88 318.26,303.97 318.61,303.06 318.95,302.15 319.29,301.24 319.62,300.33 319.95,299.43 320.27,298.52 320.58,297.61 320.89,296.70 321.19,295.79 321.48,294.88 321.77,293.98 322.04,293.07 322.31,292.16 322.57,291.25 322.81,290.34 323.05,289.43 323.27,288.52 323.47,287.62 323.65,286.71 323.81,285.80 323.90,284.89 323.88,283.98 323.85,283.07 323.78,282.17 323.69,281.26 323.58,280.35 323.44,279.44 323.27,278.53 323.08,277.62 322.85,276.72 322.60,275.81 322.31,274.90 321.99,273.99 321.62,273.08 321.21,272.18 320.76,271.27 320.25,270.36 319.67,269.45 319.01,268.54 318.25,267.63 317.35,266.73 316.25,265.82 314.75,264.91 311.00,264.00' fill='none' stroke='rgba(255,255,255,0.08)' stroke-width='0.5'/><clipPath id='g12'><polygon points='311.00,264.00 314.75,264.91 316.25,265.82 317.35,266.73 318.25,267.63 319.01,268.54 319.67,269.45 320.25,270.36 320.76,271.27 321.21,272.18 321.62,273.08 321.99,273.99 322.31,274.90 322.60,275.81 322.85,276.72 323.08,277.62 323.27,278.53 323.44,279.44 323.58,280.35 323.69,281.26 323.78,282.17 323.85,283.07 323.88,283.98 323.90,284.89 323.81,285.80 323.65,286.71 323.47,287.62 323.27,288.52 323.05,289.43 322.81,290.34 322.57,291.25 322.31,292.16 322.04,293.07 321.77,293.98 321.48,294.88 321.19,295.79 320.89,296.70 320.58,297.61 320.27,298.52 319.95,299.43 319.62,300.33 319.29,301.24 318.95,302.15 318.61,303.06 318.26,303.97 317.90,304.88 317.55,305.78 317.18,306.69 316.81,307.60 316.44,308.51 316.06,309.42 315.68,310.32 315.30,311.23 314.91,312.14 314.52,313.05 314.12,313.96 313.72,314.87 313.31,315.77 312.91,316.68 312.49,317.59 312.08,318.50 312.80,318.50 313.49,317.59 314.18,316.68 314.86,315.77 315.53,314.87 316.20,313.96 316.86,313.05 317.52,312.14 318.16,311.23 318.81,310.32 319.44,309.42 320.07,308.51 320.69,307.60 321.30,306.69 321.91,305.78 322.51,304.88 323.10,303.97 323.68,303.06 324.25,302.15 324.81,301.24 325.37,300.33 325.91,299.43 326.45,298.52 326.97,297.61 327.48,296.70 327.98,295.79 328.47,294.88 328.94,293.98 329.41,293.07 329.85,292.16 330.28,291.25 330.69,290.34 331.08,289.43 331.45,288.52 331.78,287.62 332.09,286.71 332.35,285.80 332.50,284.89 332.47,283.98 332.41,283.07 332.30,282.17 332.16,281.26 331.97,280.35 331.73,279.44 331.46,278.53 331.13,277.62 330.76,276.72 330.33,275.81 329.85,274.90 329.31,273.99 328.70,273.08 328.02,272.18 327.27,271.27 326.41,270.36 325.45,269.45 324.35,268.54 323.09,267.63 321.59,266.73 319.75,265.82 317.25,264.91 311.00,264.00'/></clipPath><g clip-path='url(#g12)'><rect x='288.50' y='238.00' width='45.00' height='34.30' fill='#2c2b33'/><rect x='288.50' y='272.00' width='45.00' height='5.30' fill='#ead0a8'/><rect x='288.50' y='277.00' width='45.00' height='5.30' fill='#e87a86'/><rect x='288.50' y='282.00' width='45.00' height='4.30' fill='#eea474'/><rect x='288.50' y='286.00' width='45.00' height='32.30' fill='#2e2c36'/></g><polyline points='311.00,264.00 314.75,264.91 316.25,265.82 317.35,266.73 318.25,267.63 319.01,268.54 319.67,269.45 320.25,270.36 320.76,271.27 321.21,272.18 321.62,273.08 321.99,273.99 322.31,274.90 322.60,275.81 322.85,276.72 323.08,277.62 323.27,278.53 323.44,279.44 323.58,280.35 323.69,281.26 323.78,282.17 323.85,283.07 323.88,283.98 323.90,284.89 323.81,285.80 323.65,286.71 323.47,287.62 323.27,288.52 323.05,289.43 322.81,290.34 322.57,291.25 322.31,292.16 322.04,293.07 321.77,293.98 321.48,294.88 321.19,295.79 320.89,296.70 320.58,297.61 320.27,298.52 319.95,299.43 319.62,300.33 319.29,301.24 318.95,302.15 318.61,303.06 318.26,303.97 317.90,304.88 317.55,305.78 317.18,306.69 316.81,307.60 316.44,308.51 316.06,309.42 315.68,310.32 315.30,311.23 314.91,312.14 314.52,313.05 314.12,313.96 313.72,314.87 313.31,315.77 312.91,316.68 312.49,317.59 312.08,318.50 312.80,318.50 313.49,317.59 314.18,316.68 314.86,315.77 315.53,314.87 316.20,313.96 316.86,313.05 317.52,312.14 318.16,311.23 318.81,310.32 319.44,309.42 320.07,308.51 320.69,307.60 321.30,306.69 321.91,305.78 322.51,304.88 323.10,303.97 323.68,303.06 324.25,302.15 324.81,301.24 325.37,300.33 325.91,299.43 326.45,298.52 326.97,297.61 327.48,296.70 327.98,295.79 328.47,294.88 328.94,293.98 329.41,293.07 329.85,292.16 330.28,291.25 330.69,290.34 331.08,289.43 331.45,288.52 331.78,287.62 332.09,286.71 332.35,285.80 332.50,284.89 332.47,283.98 332.41,283.07 332.30,282.17 332.16,281.26 331.97,280.35 331.73,279.44 331.46,278.53 331.13,277.62 330.76,276.72 330.33,275.81 329.85,274.90 329.31,273.99 328.70,273.08 328.02,272.18 327.27,271.27 326.41,270.36 325.45,269.45 324.35,268.54 323.09,267.63 321.59,266.73 319.75,265.82 317.25,264.91 311.00,264.00' fill='none' stroke='rgba(255,255,255,0.08)' stroke-width='0.5'/><clipPath id='e13'><polygon points='311.00,264.00 317.25,264.91 319.75,265.82 321.59,266.73 323.09,267.63 324.35,268.54 325.45,269.45 326.41,270.36 327.27,271.27 328.02,272.18 328.70,273.08 329.31,273.99 329.85,274.90 330.33,275.81 330.76,276.72 331.13,277.62 331.46,278.53 331.73,279.44 331.97,280.35 332.16,281.26 332.30,282.17 332.41,283.07 332.47,283.98 332.50,284.89 332.35,285.80 332.09,286.71 331.78,287.62 331.45,288.52 331.08,289.43 330.69,290.34 330.28,291.25 329.85,292.16 329.41,293.07 328.94,293.98 328.47,294.88 327.98,295.79 327.48,296.70 326.97,297.61 326.45,298.52 325.91,299.43 325.37,300.33 324.81,301.24 324.25,302.15 323.68,303.06 323.10,303.97 322.51,304.88 321.91,305.78 321.30,306.69 320.69,307.60 320.07,308.51 319.44,309.42 318.81,310.32 318.16,311.23 317.52,312.14 316.86,313.05 316.20,313.96 315.53,314.87 314.86,315.77 314.18,316.68 313.49,317.59 312.80,318.50 309.20,318.50 308.51,317.59 307.82,316.68 307.14,315.77 306.47,314.87 305.80,313.96 305.14,313.05 304.48,312.14 303.84,311.23 303.19,310.32 302.56,309.42 301.93,308.51 301.31,307.60 300.70,306.69 300.09,305.78 299.49,304.88 298.90,303.97 298.32,303.06 297.75,302.15 297.19,301.24 296.63,300.33 296.09,299.43 295.55,298.52 295.03,297.61 294.52,296.70 294.02,295.79 293.53,294.88 293.06,293.98 292.59,293.07 292.15,292.16 291.72,291.25 291.31,290.34 290.92,289.43 290.55,288.52 290.22,287.62 289.91,286.71 289.65,285.80 289.50,284.89 289.53,283.98 289.59,283.07 289.70,282.17 289.84,281.26 290.03,280.35 290.27,279.44 290.54,278.53 290.87,277.62 291.24,276.72 291.67,275.81 292.15,274.90 292.69,273.99 293.30,273.08 293.98,272.18 294.73,271.27 295.59,270.36 296.55,269.45 297.65,268.54 298.91,267.63 300.41,266.73 302.25,265.82 304.75,264.91 311.00,264.00'/></clipPath><g clip-path='url(#e13)'><ellipse cx='301.32' cy='285.00' rx='8.60' ry='24.53' fill='rgba(255,255,255,0.10)'/><ellipse cx='326.05' cy='290.00' rx='7.52' ry='27.25' fill='rgba(0,0,0,0.12)'/></g></g><path d='M312,318.5 L312.5,324' stroke='#333' stroke-width='0.4'/><rect x='312' y='323.5' width='3' height='4' fill='#e0e8f0'/><rect x='312' y='325.5' width='3' height='2' fill='#1e2630'/><g transform='rotate(0 58.3 339)'><clipPath id='bc14'><path d='M50.30,327.98 C50.30,317.72 66.30,317.72 66.30,327.98 C66.30,332.54 60.22,335.96 59.42,339.00 L57.18,339.00 C56.38,335.96 50.30,332.54 50.30,327.98 Z'/></clipPath><g clip-path='url(#bc14)'><rect x='49.30' y='318.10' width='18.00' height='7.90' fill='#f1c46e'/><rect x='49.30' y='325.70' width='18.00' height='3.15' fill='#d9533e'/><rect x='49.30' y='328.55' width='18.00' height='3.15' fill='#f4d28a'/><rect x='49.30' y='331.40' width='18.00' height='7.90' fill='#d0713d'/><ellipse cx='54.78' cy='326.65' rx='3.20' ry='5.70' fill='rgba(255,255,255,0.12)'/><ellipse cx='63.10' cy='329.50' rx='3.20' ry='7.60' fill='rgba(0,0,0,0.12)'/></g><path d='M57.50,339.00 L57.58,339.91 M59.10,339.00 L59.02,339.91' stroke='#333' stroke-width='0.3'/><rect x='57.58' y='339.76' width='1.44' height='1.52' fill='#2a2a30'/></g><g transform='rotate(0 131.3 354.0)'><clipPath id='bc15'><path d='M126.80,347.91 C126.80,342.24 135.80,342.24 135.80,347.91 C135.80,350.43 132.38,352.32 131.93,354.00 L130.67,354.00 C130.22,352.32 126.80,350.43 126.80,347.91 Z'/></clipPath><g clip-path='url(#bc15)'><rect x='125.80' y='342.45' width='11.00' height='6.08' fill='#d8e4c8'/><rect x='125.80' y='348.23' width='11.00' height='6.08' fill='#3f8a5a'/><ellipse cx='129.32' cy='347.18' rx='1.80' ry='3.15' fill='rgba(255,255,255,0.12)'/><ellipse cx='134.00' cy='348.75' rx='1.80' ry='4.20' fill='rgba(0,0,0,0.12)'/></g><path d='M130.85,354.00 L130.70,354.72 M131.75,354.00 L131.90,354.72' stroke='#333' stroke-width='0.3'/><rect x='130.70' y='354.60' width='1.20' height='1.20' fill='#2a2a30'/></g><g transform='rotate(0 58.3 376)'><clipPath id='bc16'><path d='M50.80,365.56 C50.80,355.84 65.80,355.84 65.80,365.56 C65.80,369.88 60.10,373.12 59.35,376.00 L57.25,376.00 C56.50,373.12 50.80,369.88 50.80,365.56 Z'/></clipPath><g clip-path='url(#bc16)'><rect x='49.80' y='356.20' width='17.00' height='6.60' fill='#e9b268'/><rect x='49.80' y='362.50' width='17.00' height='3.90' fill='#2f3352'/><rect x='49.80' y='366.10' width='17.00' height='3.00' fill='#f1a14a'/><rect x='49.80' y='368.80' width='17.00' height='7.50' fill='#c8503b'/><ellipse cx='55.00' cy='364.30' rx='3.00' ry='5.40' fill='rgba(255,255,255,0.12)'/><ellipse cx='62.80' cy='367.00' rx='3.00' ry='7.20' fill='rgba(0,0,0,0.12)'/></g><path d='M57.55,376.00 L57.62,376.86 M59.05,376.00 L58.97,376.86' stroke='#333' stroke-width='0.3'/><rect x='57.62' y='376.72' width='1.35' height='1.44' fill='#2a2a30'/></g><g transform='rotate(0 86.6 406.5)'><clipPath id='bc17'><path d='M81.60,399.83 C81.60,393.62 91.60,393.62 91.60,399.83 C91.60,402.59 87.80,404.66 87.30,406.50 L85.90,406.50 C85.40,404.66 81.60,402.59 81.60,399.83 Z'/></clipPath><g clip-path='url(#bc17)'><rect x='80.60' y='393.85' width='12.00' height='7.20' fill='#f2e2b0'/><rect x='80.60' y='400.75' width='12.00' height='6.05' fill='#2e2c3c'/><ellipse cx='84.40' cy='399.02' rx='2.00' ry='3.45' fill='rgba(255,255,255,0.12)'/><ellipse cx='89.60' cy='400.75' rx='2.00' ry='4.60' fill='rgba(0,0,0,0.12)'/></g><path d='M86.10,406.50 L86.00,407.22 M87.10,406.50 L87.20,407.22' stroke='#333' stroke-width='0.3'/><rect x='86.00' y='407.10' width='1.20' height='1.20' fill='#2a2a30'/></g><g transform='rotate(0 64.5 414.5)'><clipPath id='bc18'><path d='M58.50,406.38 C58.50,398.82 70.50,398.82 70.50,406.38 C70.50,409.74 65.94,412.26 65.34,414.50 L63.66,414.50 C63.06,412.26 58.50,409.74 58.50,406.38 Z'/></clipPath><g clip-path='url(#bc18)'><rect x='57.50' y='399.10' width='14.00' height='8.70' fill='#d84a6a'/><rect x='57.50' y='407.50' width='14.00' height='7.30' fill='#b83450'/><ellipse cx='61.86' cy='405.40' rx='2.40' ry='4.20' fill='rgba(255,255,255,0.12)'/><ellipse cx='68.10' cy='407.50' rx='2.40' ry='5.60' fill='rgba(0,0,0,0.12)'/></g><path d='M63.90,414.50 L63.90,415.22 M65.10,414.50 L65.10,415.22' stroke='#333' stroke-width='0.3'/><rect x='63.90' y='415.10' width='1.20' height='1.20' fill='#2a2a30'/></g><g transform='rotate(0 122.4 427.0)'><clipPath id='bc19'><path d='M117.90,420.91 C117.90,415.24 126.90,415.24 126.90,420.91 C126.90,423.43 123.48,425.32 123.03,427.00 L121.77,427.00 C121.32,425.32 117.90,423.43 117.90,420.91 Z'/></clipPath><g clip-path='url(#bc19)'><rect x='116.90' y='415.45' width='11.00' height='6.60' fill='#b49ab4'/><rect x='116.90' y='421.75' width='11.00' height='5.55' fill='#5a4a7a'/><ellipse cx='120.42' cy='420.18' rx='1.80' ry='3.15' fill='rgba(255,255,255,0.12)'/><ellipse cx='125.10' cy='421.75' rx='1.80' ry='4.20' fill='rgba(0,0,0,0.12)'/></g><path d='M121.95,427.00 L121.80,427.72 M122.85,427.00 L123.00,427.72' stroke='#333' stroke-width='0.3'/><rect x='121.80' y='427.60' width='1.20' height='1.20' fill='#2a2a30'/></g><g transform='rotate(0 166.5 427)'><clipPath id='bc20'><path d='M160.00,418.88 C160.00,411.32 173.00,411.32 173.00,418.88 C173.00,422.24 168.06,424.76 167.41,427.00 L165.59,427.00 C164.94,424.76 160.00,422.24 160.00,418.88 Z'/></clipPath><g clip-path='url(#bc20)'><rect x='159.00' y='411.60' width='15.00' height='7.30' fill='#4a7a6a'/><rect x='159.00' y='418.60' width='15.00' height='4.50' fill='#d06a60'/><rect x='159.00' y='422.80' width='15.00' height='4.50' fill='#2e5e5a'/><ellipse cx='163.64' cy='417.90' rx='2.60' ry='4.20' fill='rgba(255,255,255,0.12)'/><ellipse cx='170.40' cy='420.00' rx='2.60' ry='5.60' fill='rgba(0,0,0,0.12)'/></g><path d='M165.85,427.00 L165.90,427.72 M167.15,427.00 L167.10,427.72' stroke='#333' stroke-width='0.3'/><rect x='165.90' y='427.60' width='1.20' height='1.20' fill='#2a2a30'/></g><g transform='rotate(0 180.6 419.5)'><clipPath id='bc21'><path d='M172.10,409.06 C172.10,399.34 189.10,399.34 189.10,409.06 C189.10,413.38 182.64,416.62 181.79,419.50 L179.41,419.50 C178.56,416.62 172.10,413.38 172.10,409.06 Z'/></clipPath><g clip-path='url(#bc21)'><rect x='171.10' y='399.70' width='19.00' height='7.50' fill='#e84a48'/><rect x='171.10' y='406.90' width='19.00' height='7.50' fill='#f08a40'/><rect x='171.10' y='414.10' width='19.00' height='5.70' fill='#d03a48'/><ellipse cx='176.86' cy='407.80' rx='3.40' ry='5.40' fill='rgba(255,255,255,0.12)'/><ellipse cx='185.70' cy='410.50' rx='3.40' ry='7.20' fill='rgba(0,0,0,0.12)'/></g><path d='M179.75,419.50 L179.84,420.36 M181.45,419.50 L181.36,420.36' stroke='#333' stroke-width='0.3'/><rect x='179.84' y='420.22' width='1.53' height='1.44' fill='#2a2a30'/></g><g transform='rotate(0 253.3 404)'><clipPath id='bc22'><path d='M247.30,395.88 C247.30,388.32 259.30,388.32 259.30,395.88 C259.30,399.24 254.74,401.76 254.14,404.00 L252.46,404.00 C251.86,401.76 247.30,399.24 247.30,395.88 Z'/></clipPath><g clip-path='url(#bc22)'><rect x='246.30' y='388.60' width='14.00' height='6.60' fill='#2b3245'/><rect x='246.30' y='394.90' width='14.00' height='3.80' fill='#e84a55'/><rect x='246.30' y='398.40' width='14.00' height='5.90' fill='#2b3245'/><ellipse cx='250.66' cy='394.90' rx='2.40' ry='4.20' fill='rgba(255,255,255,0.12)'/><ellipse cx='256.90' cy='397.00' rx='2.40' ry='5.60' fill='rgba(0,0,0,0.12)'/></g><path d='M252.70,404.00 L252.70,404.72 M253.90,404.00 L253.90,404.72' stroke='#333' stroke-width='0.3'/><rect x='252.70' y='404.60' width='1.20' height='1.20' fill='#2a2a30'/></g><path d='M178.5,407 L180.6,404 L182.7,407 L180.6,410 Z' fill='#2a2a40'/><clipPath id='b11'><ellipse cx='250' cy='423' rx='17.5' ry='19.5'/></clipPath><g clip-path='url(#b11)'><rect x='230' y='400' width='40' height='35' fill='#e84a48'/><path d='M230,400 L246,400 L236,432 L230,432 Z' fill='#ee7050'/><path d='M230,427 Q250,420 270,417 L270,432 L230,432 Z' fill='#243555'/><path d='M230,426.5 Q250,419.5 270,416.5' fill='none' stroke='#f0e0d8' stroke-width='1.4'/><path d='M240,404 L236,430 M246,403 L244,430 M252,403 L252,430 M258,404 L260,430' stroke='rgba(120,20,30,0.35)' stroke-width='0.7'/></g><path d='M244,404.5 Q252,401 262,405 L256,406 L248,406 Z' fill='#2a3a4a'/><g fill='none' stroke='#0c1822' stroke-linecap='round' stroke-linejoin='round'>
<path stroke-width='2.10' d='M93.4,315.1 C94,309 102,303.5 110,303.3 C117,303 121,307 120.5,314'/><path stroke-width='2.94' d='M120.5,314 C120,322 113,332 105,337.5 C101,340 97,341.5 94,341.8'/><path stroke-width='1.68' d='M94,341.8 C92,342 89.5,342 89.8,340.8 C90,339 93,337 97,334.5 C101,332 105,327 108,324.5'/>
<path stroke-width='1.83' d='M93.4,315.1 C95,316.5 100,315 104,312.5'/>
<path stroke-width='3.65' d='M108.5,309.5 C105,318 100,330 97.3,338.8'/>
<path stroke-width='2.67' d='M121.5,328 C124,322 127,317 130,316.5 C132,316.5 131.5,320 127,323.5 C124,325.5 122.5,328 123.5,330.5 C125,332.5 129,331 133.5,328'/>
<path stroke-width='2.53' d='M133.5,328 C137,324 140,319 142,316.5 C143,319 145,323 144.5,327 C144,331 139,332.5 136.5,331 M144.5,328 C146,327.5 147.5,327 149,325.5'/>
<path stroke-width='2.53' d='M149,325.5 C150.5,322 151.5,319.5 152.5,317.5 C151,322 149.5,327 150,330.5 C150.5,332 153,330.5 156,327.5'/>
<path stroke-width='2.67' d='M166.5,318.5 C163,316 157,318 156,324 C155.5,329 159,330 162,327 C164,325 166,321 167.5,317.5'/>
<path stroke-width='2.67' d='M167.5,317.5 C165,326 162,336 159.5,342.5 C158,345.5 155.5,345.5 156.5,342 C158,338 163,333 170.5,329'/>
<path stroke-width='2.67' d='M170.5,329 C172,325 173.5,320 175,316.5 C174,321 172.5,327 171.5,331.5 C174,325 178,318 182,317 C185,316.5 184.5,320 183,325 C182,329 182.5,332 185,331 C187,330 189,328 190.5,326'/>
<path stroke-width='2.10' d='M203.3,313.7 C204,309 210,304 220,303.2 C226,302.8 229,305 227.5,310'/><path stroke-width='2.67' d='M227.5,310 C226,315 220,319 215.3,319.7'/>
<path stroke-width='2.94' d='M215.3,319.7 C221,319 228,321 229,327 C229.5,333 223,338 215,340.5 C211,341.6 206,342.2 203,342'/><path stroke-width='1.68' d='M203,342 C201.5,341.8 200.5,340 202,338.8 C205,336.5 210,334.5 217.5,331.2'/>
<path stroke-width='1.83' d='M203.3,313.7 C205,315.5 209,315.5 212,314'/>
<path stroke-width='3.65' d='M217.1,310 C214,318 210,330 207,338'/>
<path stroke-width='2.67' d='M233,328 C236,322 239,317 242,315.5 C244.5,315 244,319 239.5,322.5 C236.5,325 235,328 236,330.5 C237.5,332 241,330.5 245.5,327.5'/>
<path stroke-width='2.67' d='M245.5,327.5 C248.5,322 251.5,317 254.5,315.5 C257,315 256.5,319 252,322.5 C249,325 247.5,328 248.5,330.5 C250,332 253.5,330.5 258,327.5'/>
<path stroke-width='3.37' d='M258,327.5 C260,324 262,320 264.5,318 C263,326 261,334 259.5,342'/>
<path stroke-width='2.67' d='M262,323 C265,318 270,315.5 274,315.8 C277,316.5 276.5,321 273.5,325 C271,328.5 267,330.5 264,330 M273,327 C276,325.5 279,323 281,320.5'/>
</g>
<circle cx='156.8' cy='310.8' r='1.3' fill='#0c1822'/>
</svg></div>
<div class='a' style='left:562px;top:130px;width:100px;height:420px;background:linear-gradient(90deg,#d6d6d6,#dbdbdb 50%,#e0e0e0);border-radius:5px 0 0 0;box-shadow:-1px 0 1.5px rgba(0,0,0,.45);'></div>
<div class='t m' style='left:567.4px;top:134.0px;color:#242424'>Blending Options...</div>
<div class='a' style='left:567px;top:147px;width:90px;height:1px;background:#c2c2c2;'></div>
<div class='t m' style='left:567.4px;top:152.4px;color:#242424'>Copy CSS</div>
<div class='t m' style='left:567.4px;top:163.79999999999998px;color:#242424'>Copy SVG</div>
<div class='a' style='left:567px;top:178px;width:90px;height:1px;background:#c2c2c2;'></div>
<div class='t m' style='left:567.4px;top:182.2px;color:#242424'>Duplicate Layer...</div>
<div class='t m' style='left:567.4px;top:194.0px;color:#242424'>Delete Layer</div>
<div class='a' style='left:567px;top:207px;width:90px;height:1px;background:#c2c2c2;'></div>
<div class='t m' style='left:567.4px;top:212.0px;color:#242424'>Quick Export as PNG</div>
<div class='t m' style='left:567.4px;top:223.7px;color:#242424'>Export As...</div>
<div class='a' style='left:567px;top:237px;width:90px;height:1px;background:#c2c2c2;'></div>
<div class='t m' style='left:567.4px;top:241.79999999999998px;color:#242424'>Artboard from Layers...</div>
<div class='t m' style='left:567.4px;top:253.20000000000005px;color:#adadad'>Frame from Layers...</div>
<div class='t m' style='left:567.4px;top:265.1px;color:#242424'>Convert to Frame</div>
<div class='a' style='left:567px;top:278px;width:90px;height:1px;background:#c2c2c2;'></div>
<div class='t m' style='left:567.4px;top:283.0px;color:#242424'>Mask All Objects</div>
<div class='a' style='left:567px;top:296px;width:90px;height:1px;background:#c2c2c2;'></div>
<div class='t m' style='left:567.4px;top:301.1px;color:#242424'>Convert to Smart Object</div>
<div class='a' style='left:567px;top:315px;width:90px;height:1px;background:#c2c2c2;'></div>
<div class='t m' style='left:567.4px;top:319.20000000000005px;color:#adadad'>Link Layers</div>
<div class='t m' style='left:567.4px;top:330.90000000000003px;color:#adadad'>Select Linked Layers</div>
<div class='a' style='left:567px;top:344px;width:90px;height:1px;background:#c2c2c2;'></div>
<div class='a' style='left:564.5px;top:346.4px;width:90px;height:11.3px;background:#2872e4;border-radius:3px 0 0 3px;'></div>
<div class='t m' style='left:567.4px;top:348.8px;color:#ffffff'>Rasterize Type</div>
<div class='t m' style='left:567.4px;top:360.70000000000005px;color:#adadad'>Rasterize Layer Style</div>
<div class='t m' style='left:567.4px;top:372.1px;color:#242424'>Create Work Path</div>
<div class='t m' style='left:567.4px;top:383.8px;color:#242424'>Convert to Shape</div>
<div class='a' style='left:567px;top:398px;width:90px;height:1px;background:#c2c2c2;'></div>
<div class='t m' style='left:567.4px;top:402.5px;color:#242424'>Horizontal</div>
<div class='t m' style='left:567.4px;top:413.90000000000003px;color:#242424'>Vertical</div>
<div class='a' style='left:567px;top:427px;width:90px;height:1px;background:#c2c2c2;'></div>
<div class='t m' style='left:567.4px;top:432.0px;color:#242424'>None</div>
<div class='t m' style='left:567.4px;top:443.70000000000005px;color:#242424'>Sharp</div>
<div class='t m' style='left:567.4px;top:455.40000000000003px;color:#242424'>Crisp</div>
<div class='t m' style='left:567.4px;top:467.0px;color:#242424'>Strong</div>
<div class='t m' style='left:567.4px;top:479.1px;color:#242424'>Smooth</div>
<div class='a' style='left:567px;top:492px;width:90px;height:1px;background:#c2c2c2;'></div>
<div class='t m' style='left:567.4px;top:497.3px;color:#242424'>Mac LCD</div>
<div class='t m' style='left:567.4px;top:508.9px;color:#242424'>Mac</div>
<div class='a' style='left:567px;top:522px;width:90px;height:1px;background:#c2c2c2;'></div>
<div class='t m' style='left:567.4px;top:527.1px;color:#242424'>Convert to Point Text</div>
<div class='a' style='left:567px;top:540px;width:90px;height:1px;background:#c2c2c2;'></div>
</body></html>
